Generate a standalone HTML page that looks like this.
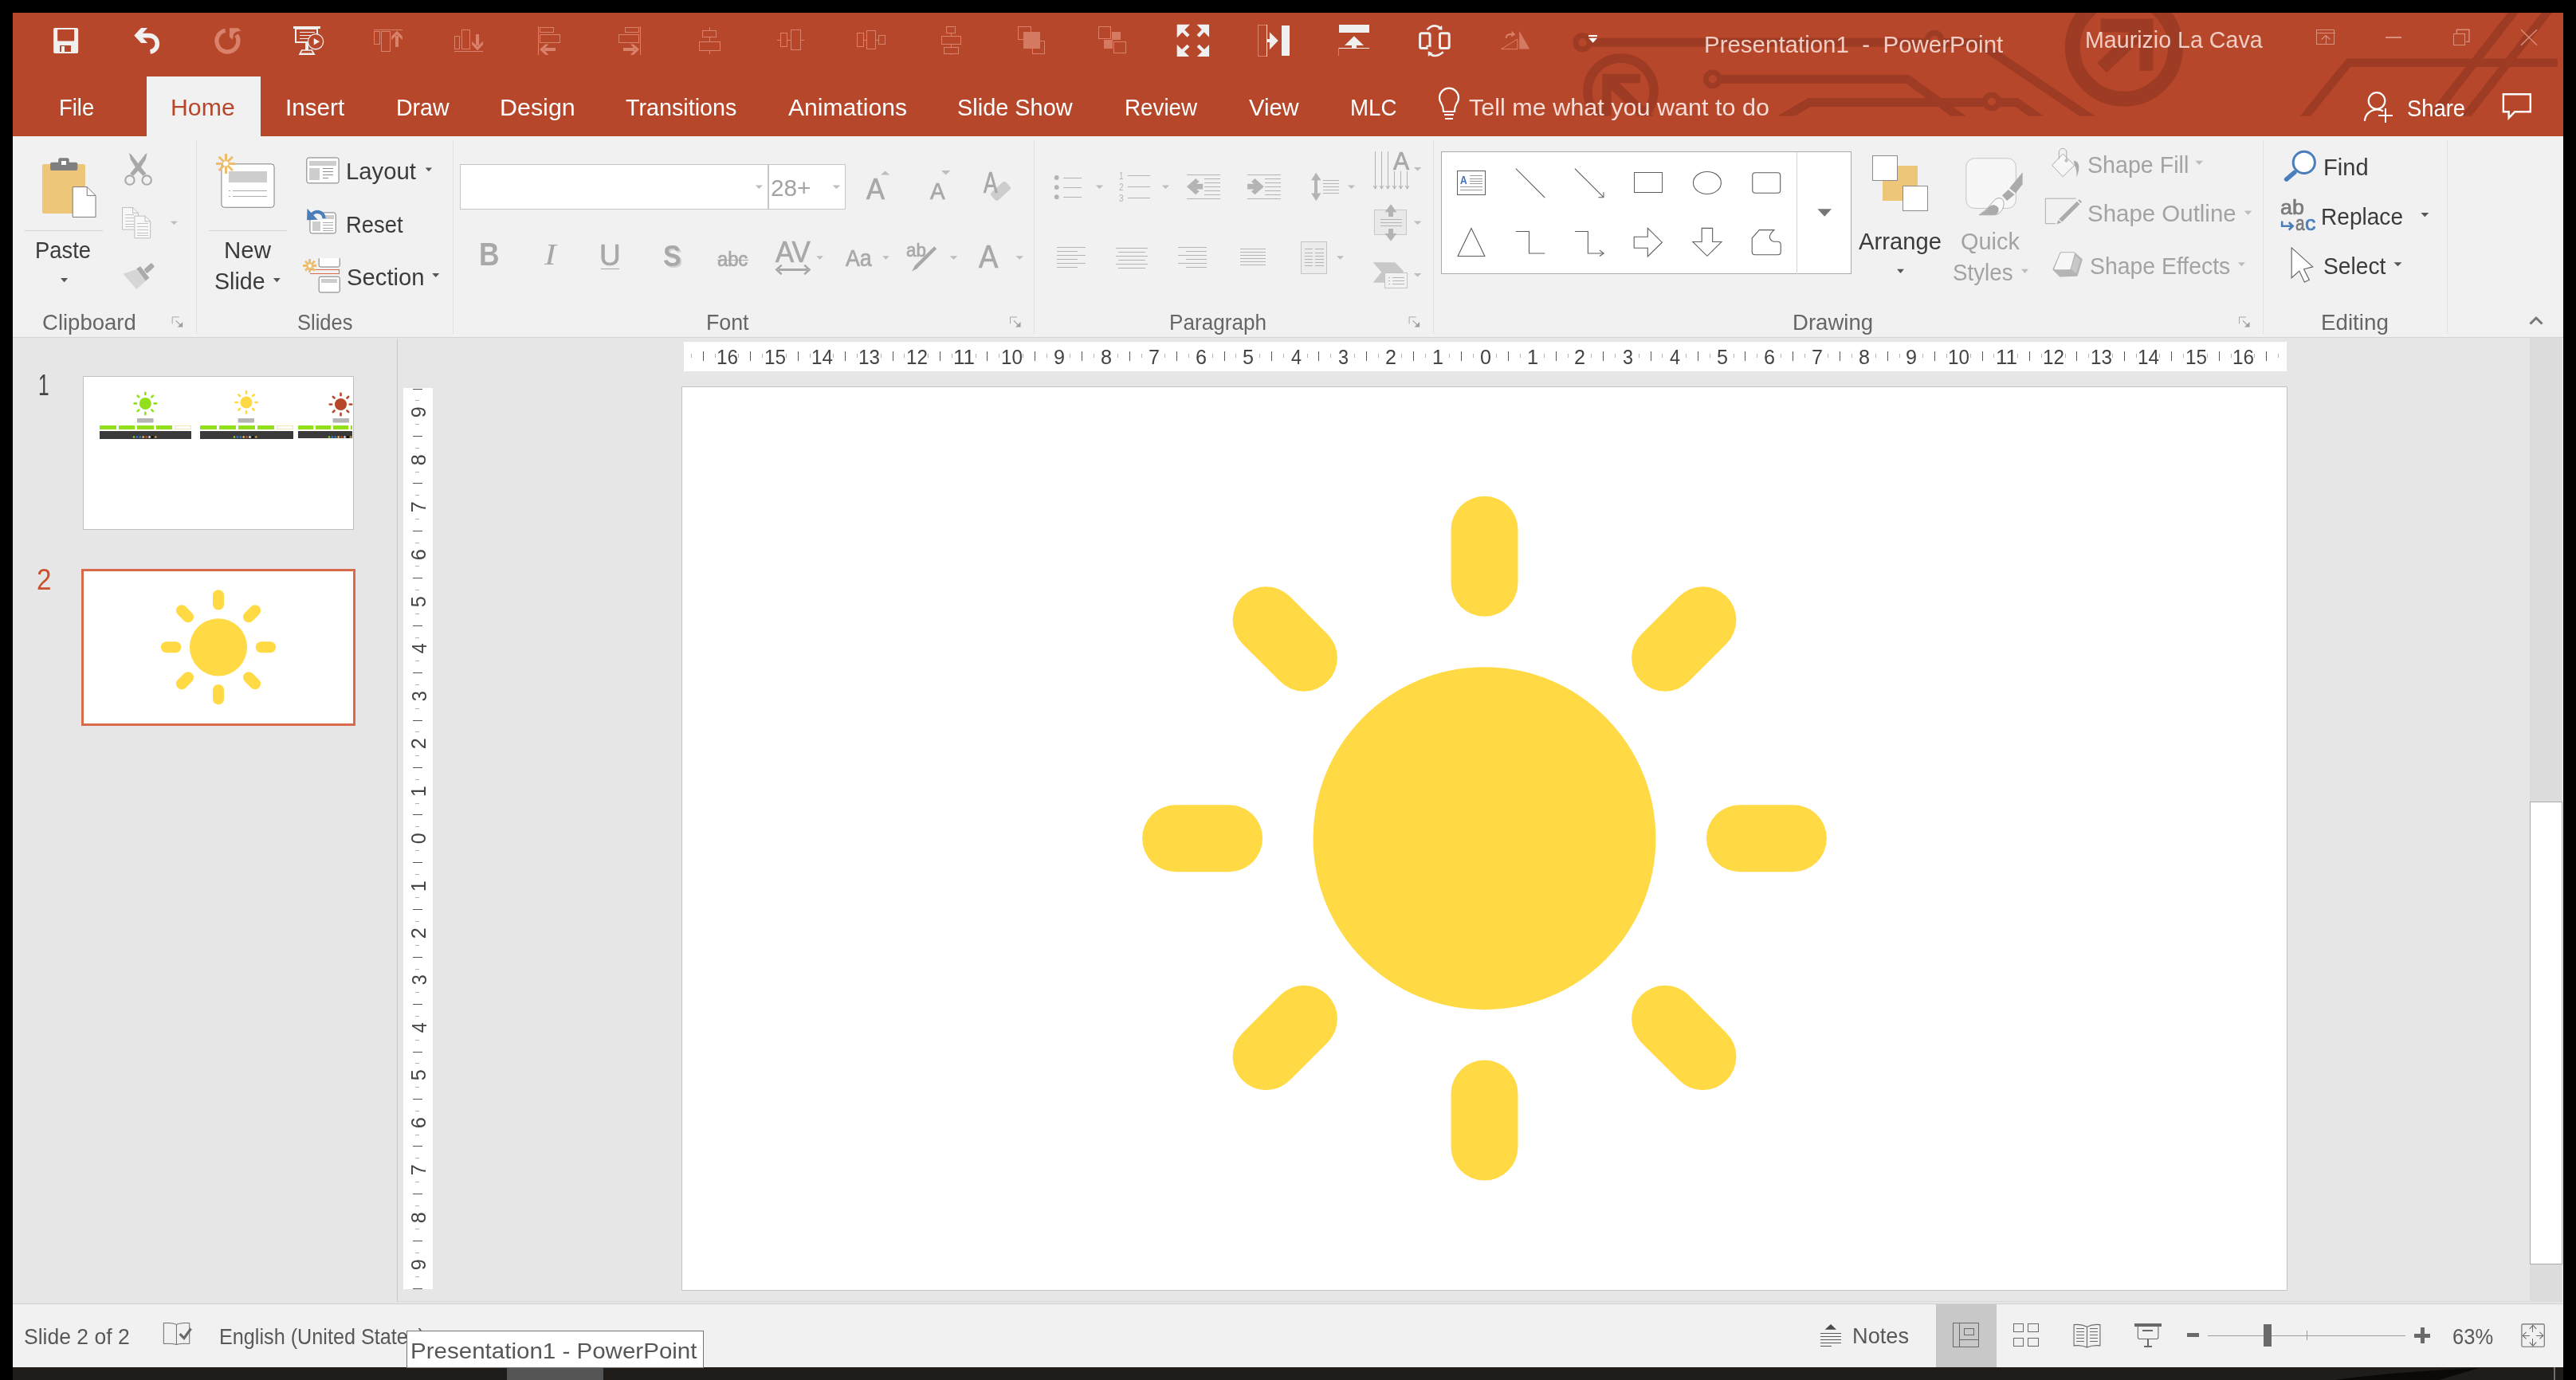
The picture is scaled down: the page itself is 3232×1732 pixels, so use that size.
<!DOCTYPE html>
<html><head><meta charset="utf-8"><title>Presentation1 - PowerPoint</title>
<style>
html,body{margin:0;padding:0;background:#000;}
body{width:3232px;height:1732px;position:relative;overflow:hidden;font-family:"Liberation Sans",sans-serif;}
#g{position:absolute;left:0;top:0;}
#tx{position:absolute;left:0;top:0;width:3232px;height:1732px;will-change:transform;}
.t{position:absolute;white-space:pre;line-height:1;transform-origin:0 0;}
</style></head><body>
<svg id="g" width="3232" height="1732" viewBox="0 0 3232 1732">
<rect x="0" y="0" width="3232" height="1732" fill="#000"  shape-rendering="crispEdges"/>
<rect x="16" y="16" width="3200" height="1700" fill="#E6E6E6"  shape-rendering="crispEdges"/>
<rect x="16" y="16" width="3200" height="155" fill="#B7472A"  shape-rendering="crispEdges"/>
<rect x="16" y="171" width="3200" height="252" fill="#F1F1F1"  shape-rendering="crispEdges"/>
<line x1="16" y1="423.5" x2="3216" y2="423.5" stroke="#D4D4D4" stroke-width="1"  shape-rendering="crispEdges"/>
<rect x="16" y="1637" width="3200" height="79" fill="#F1F1F1"  shape-rendering="crispEdges"/>
<line x1="16" y1="1636.5" x2="3216" y2="1636.5" stroke="#D0D0D0" stroke-width="1"  shape-rendering="crispEdges"/>
<line x1="498" y1="1633.5" x2="3216" y2="1633.5" stroke="#D8D8D8" stroke-width="1"  shape-rendering="crispEdges"/>
<rect x="16" y="1716" width="3200" height="16" fill="#1F1C19"  shape-rendering="crispEdges"/>
<rect x="3204" y="1716" width="2" height="16" fill="#6E6E6E"  shape-rendering="crispEdges"/>
<path d="M2930 1732 Q3000 1722 3110 1717 L3060 1732 Z" fill="#0A0908"/>
<rect x="636" y="1716" width="121" height="16" fill="#555555"  shape-rendering="crispEdges"/>
<line x1="498.5" y1="425" x2="498.5" y2="1633" stroke="#C8C8C8" stroke-width="1"  shape-rendering="crispEdges"/>
<rect x="3174" y="424" width="41" height="1210" fill="#DCDCDC"  shape-rendering="crispEdges"/>
<rect x="3215" y="424" width="1" height="1213" fill="#F0F0F0"  shape-rendering="crispEdges"/>
<rect x="3174.5" y="1006.5" width="40" height="580" fill="#FFFFFF" stroke="#ABABAB" stroke-width="1"  shape-rendering="crispEdges"/>
<rect x="855.5" y="485.5" width="2014" height="1134" fill="#FFFFFF" stroke="#C3C3C3" stroke-width="1"  shape-rendering="crispEdges"/>
<circle cx="1862.5" cy="1052.2" r="215" fill="#FFDA44"/>
<rect x="1820.50" y="622.80" width="84.00" height="151.00" rx="42.00" fill="#FFDA44" transform="rotate(0 1862.5 1052.2)"/>
<rect x="1820.50" y="622.80" width="84.00" height="151.00" rx="42.00" fill="#FFDA44" transform="rotate(45 1862.5 1052.2)"/>
<rect x="1820.50" y="622.80" width="84.00" height="151.00" rx="42.00" fill="#FFDA44" transform="rotate(90 1862.5 1052.2)"/>
<rect x="1820.50" y="622.80" width="84.00" height="151.00" rx="42.00" fill="#FFDA44" transform="rotate(135 1862.5 1052.2)"/>
<rect x="1820.50" y="622.80" width="84.00" height="151.00" rx="42.00" fill="#FFDA44" transform="rotate(180 1862.5 1052.2)"/>
<rect x="1820.50" y="622.80" width="84.00" height="151.00" rx="42.00" fill="#FFDA44" transform="rotate(225 1862.5 1052.2)"/>
<rect x="1820.50" y="622.80" width="84.00" height="151.00" rx="42.00" fill="#FFDA44" transform="rotate(270 1862.5 1052.2)"/>
<rect x="1820.50" y="622.80" width="84.00" height="151.00" rx="42.00" fill="#FFDA44" transform="rotate(315 1862.5 1052.2)"/>
<rect x="858" y="429" width="2011" height="37" fill="#FFFFFF"  shape-rendering="crispEdges"/>
<rect x="506" y="487" width="37" height="1131" fill="#FFFFFF"  shape-rendering="crispEdges"/>
<line x1="867.5" y1="444" x2="867.5" y2="449" stroke="#B0B0B0" stroke-width="1"  shape-rendering="crispEdges"/>
<line x1="882.5" y1="441" x2="882.5" y2="453" stroke="#555555" stroke-width="1"  shape-rendering="crispEdges"/>
<line x1="897.5" y1="444" x2="897.5" y2="449" stroke="#B0B0B0" stroke-width="1"  shape-rendering="crispEdges"/>
<line x1="926.5" y1="444" x2="926.5" y2="449" stroke="#B0B0B0" stroke-width="1"  shape-rendering="crispEdges"/>
<line x1="941.5" y1="441" x2="941.5" y2="453" stroke="#555555" stroke-width="1"  shape-rendering="crispEdges"/>
<line x1="956.5" y1="444" x2="956.5" y2="449" stroke="#B0B0B0" stroke-width="1"  shape-rendering="crispEdges"/>
<line x1="986.5" y1="444" x2="986.5" y2="449" stroke="#B0B0B0" stroke-width="1"  shape-rendering="crispEdges"/>
<line x1="1001.5" y1="441" x2="1001.5" y2="453" stroke="#555555" stroke-width="1"  shape-rendering="crispEdges"/>
<line x1="1016.5" y1="444" x2="1016.5" y2="449" stroke="#B0B0B0" stroke-width="1"  shape-rendering="crispEdges"/>
<line x1="1045.5" y1="444" x2="1045.5" y2="449" stroke="#B0B0B0" stroke-width="1"  shape-rendering="crispEdges"/>
<line x1="1060.5" y1="441" x2="1060.5" y2="453" stroke="#555555" stroke-width="1"  shape-rendering="crispEdges"/>
<line x1="1075.5" y1="444" x2="1075.5" y2="449" stroke="#B0B0B0" stroke-width="1"  shape-rendering="crispEdges"/>
<line x1="1105.5" y1="444" x2="1105.5" y2="449" stroke="#B0B0B0" stroke-width="1"  shape-rendering="crispEdges"/>
<line x1="1120.5" y1="441" x2="1120.5" y2="453" stroke="#555555" stroke-width="1"  shape-rendering="crispEdges"/>
<line x1="1134.5" y1="444" x2="1134.5" y2="449" stroke="#B0B0B0" stroke-width="1"  shape-rendering="crispEdges"/>
<line x1="1164.5" y1="444" x2="1164.5" y2="449" stroke="#B0B0B0" stroke-width="1"  shape-rendering="crispEdges"/>
<line x1="1179.5" y1="441" x2="1179.5" y2="453" stroke="#555555" stroke-width="1"  shape-rendering="crispEdges"/>
<line x1="1194.5" y1="444" x2="1194.5" y2="449" stroke="#B0B0B0" stroke-width="1"  shape-rendering="crispEdges"/>
<line x1="1224.5" y1="444" x2="1224.5" y2="449" stroke="#B0B0B0" stroke-width="1"  shape-rendering="crispEdges"/>
<line x1="1238.5" y1="441" x2="1238.5" y2="453" stroke="#555555" stroke-width="1"  shape-rendering="crispEdges"/>
<line x1="1253.5" y1="444" x2="1253.5" y2="449" stroke="#B0B0B0" stroke-width="1"  shape-rendering="crispEdges"/>
<line x1="1283.5" y1="444" x2="1283.5" y2="449" stroke="#B0B0B0" stroke-width="1"  shape-rendering="crispEdges"/>
<line x1="1298.5" y1="441" x2="1298.5" y2="453" stroke="#555555" stroke-width="1"  shape-rendering="crispEdges"/>
<line x1="1313.5" y1="444" x2="1313.5" y2="449" stroke="#B0B0B0" stroke-width="1"  shape-rendering="crispEdges"/>
<line x1="1342.5" y1="444" x2="1342.5" y2="449" stroke="#B0B0B0" stroke-width="1"  shape-rendering="crispEdges"/>
<line x1="1357.5" y1="441" x2="1357.5" y2="453" stroke="#555555" stroke-width="1"  shape-rendering="crispEdges"/>
<line x1="1372.5" y1="444" x2="1372.5" y2="449" stroke="#B0B0B0" stroke-width="1"  shape-rendering="crispEdges"/>
<line x1="1402.5" y1="444" x2="1402.5" y2="449" stroke="#B0B0B0" stroke-width="1"  shape-rendering="crispEdges"/>
<line x1="1417.5" y1="441" x2="1417.5" y2="453" stroke="#555555" stroke-width="1"  shape-rendering="crispEdges"/>
<line x1="1432.5" y1="444" x2="1432.5" y2="449" stroke="#B0B0B0" stroke-width="1"  shape-rendering="crispEdges"/>
<line x1="1461.5" y1="444" x2="1461.5" y2="449" stroke="#B0B0B0" stroke-width="1"  shape-rendering="crispEdges"/>
<line x1="1476.5" y1="441" x2="1476.5" y2="453" stroke="#555555" stroke-width="1"  shape-rendering="crispEdges"/>
<line x1="1491.5" y1="444" x2="1491.5" y2="449" stroke="#B0B0B0" stroke-width="1"  shape-rendering="crispEdges"/>
<line x1="1521.5" y1="444" x2="1521.5" y2="449" stroke="#B0B0B0" stroke-width="1"  shape-rendering="crispEdges"/>
<line x1="1536.5" y1="441" x2="1536.5" y2="453" stroke="#555555" stroke-width="1"  shape-rendering="crispEdges"/>
<line x1="1550.5" y1="444" x2="1550.5" y2="449" stroke="#B0B0B0" stroke-width="1"  shape-rendering="crispEdges"/>
<line x1="1580.5" y1="444" x2="1580.5" y2="449" stroke="#B0B0B0" stroke-width="1"  shape-rendering="crispEdges"/>
<line x1="1595.5" y1="441" x2="1595.5" y2="453" stroke="#555555" stroke-width="1"  shape-rendering="crispEdges"/>
<line x1="1610.5" y1="444" x2="1610.5" y2="449" stroke="#B0B0B0" stroke-width="1"  shape-rendering="crispEdges"/>
<line x1="1640.5" y1="444" x2="1640.5" y2="449" stroke="#B0B0B0" stroke-width="1"  shape-rendering="crispEdges"/>
<line x1="1654.5" y1="441" x2="1654.5" y2="453" stroke="#555555" stroke-width="1"  shape-rendering="crispEdges"/>
<line x1="1669.5" y1="444" x2="1669.5" y2="449" stroke="#B0B0B0" stroke-width="1"  shape-rendering="crispEdges"/>
<line x1="1699.5" y1="444" x2="1699.5" y2="449" stroke="#B0B0B0" stroke-width="1"  shape-rendering="crispEdges"/>
<line x1="1714.5" y1="441" x2="1714.5" y2="453" stroke="#555555" stroke-width="1"  shape-rendering="crispEdges"/>
<line x1="1729.5" y1="444" x2="1729.5" y2="449" stroke="#B0B0B0" stroke-width="1"  shape-rendering="crispEdges"/>
<line x1="1758.5" y1="444" x2="1758.5" y2="449" stroke="#B0B0B0" stroke-width="1"  shape-rendering="crispEdges"/>
<line x1="1773.5" y1="441" x2="1773.5" y2="453" stroke="#555555" stroke-width="1"  shape-rendering="crispEdges"/>
<line x1="1788.5" y1="444" x2="1788.5" y2="449" stroke="#B0B0B0" stroke-width="1"  shape-rendering="crispEdges"/>
<line x1="1818.5" y1="444" x2="1818.5" y2="449" stroke="#B0B0B0" stroke-width="1"  shape-rendering="crispEdges"/>
<line x1="1833.5" y1="441" x2="1833.5" y2="453" stroke="#555555" stroke-width="1"  shape-rendering="crispEdges"/>
<line x1="1848.5" y1="444" x2="1848.5" y2="449" stroke="#B0B0B0" stroke-width="1"  shape-rendering="crispEdges"/>
<line x1="1877.5" y1="444" x2="1877.5" y2="449" stroke="#B0B0B0" stroke-width="1"  shape-rendering="crispEdges"/>
<line x1="1892.5" y1="441" x2="1892.5" y2="453" stroke="#555555" stroke-width="1"  shape-rendering="crispEdges"/>
<line x1="1907.5" y1="444" x2="1907.5" y2="449" stroke="#B0B0B0" stroke-width="1"  shape-rendering="crispEdges"/>
<line x1="1937.5" y1="444" x2="1937.5" y2="449" stroke="#B0B0B0" stroke-width="1"  shape-rendering="crispEdges"/>
<line x1="1952.5" y1="441" x2="1952.5" y2="453" stroke="#555555" stroke-width="1"  shape-rendering="crispEdges"/>
<line x1="1967.5" y1="444" x2="1967.5" y2="449" stroke="#B0B0B0" stroke-width="1"  shape-rendering="crispEdges"/>
<line x1="1996.5" y1="444" x2="1996.5" y2="449" stroke="#B0B0B0" stroke-width="1"  shape-rendering="crispEdges"/>
<line x1="2011.5" y1="441" x2="2011.5" y2="453" stroke="#555555" stroke-width="1"  shape-rendering="crispEdges"/>
<line x1="2026.5" y1="444" x2="2026.5" y2="449" stroke="#B0B0B0" stroke-width="1"  shape-rendering="crispEdges"/>
<line x1="2056.5" y1="444" x2="2056.5" y2="449" stroke="#B0B0B0" stroke-width="1"  shape-rendering="crispEdges"/>
<line x1="2071.5" y1="441" x2="2071.5" y2="453" stroke="#555555" stroke-width="1"  shape-rendering="crispEdges"/>
<line x1="2085.5" y1="444" x2="2085.5" y2="449" stroke="#B0B0B0" stroke-width="1"  shape-rendering="crispEdges"/>
<line x1="2115.5" y1="444" x2="2115.5" y2="449" stroke="#B0B0B0" stroke-width="1"  shape-rendering="crispEdges"/>
<line x1="2130.5" y1="441" x2="2130.5" y2="453" stroke="#555555" stroke-width="1"  shape-rendering="crispEdges"/>
<line x1="2145.5" y1="444" x2="2145.5" y2="449" stroke="#B0B0B0" stroke-width="1"  shape-rendering="crispEdges"/>
<line x1="2175.5" y1="444" x2="2175.5" y2="449" stroke="#B0B0B0" stroke-width="1"  shape-rendering="crispEdges"/>
<line x1="2189.5" y1="441" x2="2189.5" y2="453" stroke="#555555" stroke-width="1"  shape-rendering="crispEdges"/>
<line x1="2204.5" y1="444" x2="2204.5" y2="449" stroke="#B0B0B0" stroke-width="1"  shape-rendering="crispEdges"/>
<line x1="2234.5" y1="444" x2="2234.5" y2="449" stroke="#B0B0B0" stroke-width="1"  shape-rendering="crispEdges"/>
<line x1="2249.5" y1="441" x2="2249.5" y2="453" stroke="#555555" stroke-width="1"  shape-rendering="crispEdges"/>
<line x1="2264.5" y1="444" x2="2264.5" y2="449" stroke="#B0B0B0" stroke-width="1"  shape-rendering="crispEdges"/>
<line x1="2293.5" y1="444" x2="2293.5" y2="449" stroke="#B0B0B0" stroke-width="1"  shape-rendering="crispEdges"/>
<line x1="2308.5" y1="441" x2="2308.5" y2="453" stroke="#555555" stroke-width="1"  shape-rendering="crispEdges"/>
<line x1="2323.5" y1="444" x2="2323.5" y2="449" stroke="#B0B0B0" stroke-width="1"  shape-rendering="crispEdges"/>
<line x1="2353.5" y1="444" x2="2353.5" y2="449" stroke="#B0B0B0" stroke-width="1"  shape-rendering="crispEdges"/>
<line x1="2368.5" y1="441" x2="2368.5" y2="453" stroke="#555555" stroke-width="1"  shape-rendering="crispEdges"/>
<line x1="2383.5" y1="444" x2="2383.5" y2="449" stroke="#B0B0B0" stroke-width="1"  shape-rendering="crispEdges"/>
<line x1="2412.5" y1="444" x2="2412.5" y2="449" stroke="#B0B0B0" stroke-width="1"  shape-rendering="crispEdges"/>
<line x1="2427.5" y1="441" x2="2427.5" y2="453" stroke="#555555" stroke-width="1"  shape-rendering="crispEdges"/>
<line x1="2442.5" y1="444" x2="2442.5" y2="449" stroke="#B0B0B0" stroke-width="1"  shape-rendering="crispEdges"/>
<line x1="2472.5" y1="444" x2="2472.5" y2="449" stroke="#B0B0B0" stroke-width="1"  shape-rendering="crispEdges"/>
<line x1="2487.5" y1="441" x2="2487.5" y2="453" stroke="#555555" stroke-width="1"  shape-rendering="crispEdges"/>
<line x1="2501.5" y1="444" x2="2501.5" y2="449" stroke="#B0B0B0" stroke-width="1"  shape-rendering="crispEdges"/>
<line x1="2531.5" y1="444" x2="2531.5" y2="449" stroke="#B0B0B0" stroke-width="1"  shape-rendering="crispEdges"/>
<line x1="2546.5" y1="441" x2="2546.5" y2="453" stroke="#555555" stroke-width="1"  shape-rendering="crispEdges"/>
<line x1="2561.5" y1="444" x2="2561.5" y2="449" stroke="#B0B0B0" stroke-width="1"  shape-rendering="crispEdges"/>
<line x1="2591.5" y1="444" x2="2591.5" y2="449" stroke="#B0B0B0" stroke-width="1"  shape-rendering="crispEdges"/>
<line x1="2605.5" y1="441" x2="2605.5" y2="453" stroke="#555555" stroke-width="1"  shape-rendering="crispEdges"/>
<line x1="2620.5" y1="444" x2="2620.5" y2="449" stroke="#B0B0B0" stroke-width="1"  shape-rendering="crispEdges"/>
<line x1="2650.5" y1="444" x2="2650.5" y2="449" stroke="#B0B0B0" stroke-width="1"  shape-rendering="crispEdges"/>
<line x1="2665.5" y1="441" x2="2665.5" y2="453" stroke="#555555" stroke-width="1"  shape-rendering="crispEdges"/>
<line x1="2680.5" y1="444" x2="2680.5" y2="449" stroke="#B0B0B0" stroke-width="1"  shape-rendering="crispEdges"/>
<line x1="2709.5" y1="444" x2="2709.5" y2="449" stroke="#B0B0B0" stroke-width="1"  shape-rendering="crispEdges"/>
<line x1="2724.5" y1="441" x2="2724.5" y2="453" stroke="#555555" stroke-width="1"  shape-rendering="crispEdges"/>
<line x1="2739.5" y1="444" x2="2739.5" y2="449" stroke="#B0B0B0" stroke-width="1"  shape-rendering="crispEdges"/>
<line x1="2769.5" y1="444" x2="2769.5" y2="449" stroke="#B0B0B0" stroke-width="1"  shape-rendering="crispEdges"/>
<line x1="2784.5" y1="441" x2="2784.5" y2="453" stroke="#555555" stroke-width="1"  shape-rendering="crispEdges"/>
<line x1="2799.5" y1="444" x2="2799.5" y2="449" stroke="#B0B0B0" stroke-width="1"  shape-rendering="crispEdges"/>
<line x1="2828.5" y1="444" x2="2828.5" y2="449" stroke="#B0B0B0" stroke-width="1"  shape-rendering="crispEdges"/>
<line x1="2843.5" y1="441" x2="2843.5" y2="453" stroke="#555555" stroke-width="1"  shape-rendering="crispEdges"/>
<line x1="2858.5" y1="444" x2="2858.5" y2="449" stroke="#B0B0B0" stroke-width="1"  shape-rendering="crispEdges"/>
<line x1="518" y1="488.5" x2="530" y2="488.5" stroke="#555555" stroke-width="1"  shape-rendering="crispEdges"/>
<line x1="521" y1="502.5" x2="526" y2="502.5" stroke="#B0B0B0" stroke-width="1"  shape-rendering="crispEdges"/>
<line x1="521" y1="532.5" x2="526" y2="532.5" stroke="#B0B0B0" stroke-width="1"  shape-rendering="crispEdges"/>
<line x1="518" y1="547.5" x2="530" y2="547.5" stroke="#555555" stroke-width="1"  shape-rendering="crispEdges"/>
<line x1="521" y1="562.5" x2="526" y2="562.5" stroke="#B0B0B0" stroke-width="1"  shape-rendering="crispEdges"/>
<line x1="521" y1="592.5" x2="526" y2="592.5" stroke="#B0B0B0" stroke-width="1"  shape-rendering="crispEdges"/>
<line x1="518" y1="606.5" x2="530" y2="606.5" stroke="#555555" stroke-width="1"  shape-rendering="crispEdges"/>
<line x1="521" y1="621.5" x2="526" y2="621.5" stroke="#B0B0B0" stroke-width="1"  shape-rendering="crispEdges"/>
<line x1="521" y1="651.5" x2="526" y2="651.5" stroke="#B0B0B0" stroke-width="1"  shape-rendering="crispEdges"/>
<line x1="518" y1="666.5" x2="530" y2="666.5" stroke="#555555" stroke-width="1"  shape-rendering="crispEdges"/>
<line x1="521" y1="681.5" x2="526" y2="681.5" stroke="#B0B0B0" stroke-width="1"  shape-rendering="crispEdges"/>
<line x1="521" y1="710.5" x2="526" y2="710.5" stroke="#B0B0B0" stroke-width="1"  shape-rendering="crispEdges"/>
<line x1="518" y1="725.5" x2="530" y2="725.5" stroke="#555555" stroke-width="1"  shape-rendering="crispEdges"/>
<line x1="521" y1="740.5" x2="526" y2="740.5" stroke="#B0B0B0" stroke-width="1"  shape-rendering="crispEdges"/>
<line x1="521" y1="770.5" x2="526" y2="770.5" stroke="#B0B0B0" stroke-width="1"  shape-rendering="crispEdges"/>
<line x1="518" y1="785.5" x2="530" y2="785.5" stroke="#555555" stroke-width="1"  shape-rendering="crispEdges"/>
<line x1="521" y1="800.5" x2="526" y2="800.5" stroke="#B0B0B0" stroke-width="1"  shape-rendering="crispEdges"/>
<line x1="521" y1="829.5" x2="526" y2="829.5" stroke="#B0B0B0" stroke-width="1"  shape-rendering="crispEdges"/>
<line x1="518" y1="844.5" x2="530" y2="844.5" stroke="#555555" stroke-width="1"  shape-rendering="crispEdges"/>
<line x1="521" y1="859.5" x2="526" y2="859.5" stroke="#B0B0B0" stroke-width="1"  shape-rendering="crispEdges"/>
<line x1="521" y1="889.5" x2="526" y2="889.5" stroke="#B0B0B0" stroke-width="1"  shape-rendering="crispEdges"/>
<line x1="518" y1="904.5" x2="530" y2="904.5" stroke="#555555" stroke-width="1"  shape-rendering="crispEdges"/>
<line x1="521" y1="918.5" x2="526" y2="918.5" stroke="#B0B0B0" stroke-width="1"  shape-rendering="crispEdges"/>
<line x1="521" y1="948.5" x2="526" y2="948.5" stroke="#B0B0B0" stroke-width="1"  shape-rendering="crispEdges"/>
<line x1="518" y1="963.5" x2="530" y2="963.5" stroke="#555555" stroke-width="1"  shape-rendering="crispEdges"/>
<line x1="521" y1="978.5" x2="526" y2="978.5" stroke="#B0B0B0" stroke-width="1"  shape-rendering="crispEdges"/>
<line x1="521" y1="1008.5" x2="526" y2="1008.5" stroke="#B0B0B0" stroke-width="1"  shape-rendering="crispEdges"/>
<line x1="518" y1="1022.5" x2="530" y2="1022.5" stroke="#555555" stroke-width="1"  shape-rendering="crispEdges"/>
<line x1="521" y1="1037.5" x2="526" y2="1037.5" stroke="#B0B0B0" stroke-width="1"  shape-rendering="crispEdges"/>
<line x1="521" y1="1067.5" x2="526" y2="1067.5" stroke="#B0B0B0" stroke-width="1"  shape-rendering="crispEdges"/>
<line x1="518" y1="1082.5" x2="530" y2="1082.5" stroke="#555555" stroke-width="1"  shape-rendering="crispEdges"/>
<line x1="521" y1="1097.5" x2="526" y2="1097.5" stroke="#B0B0B0" stroke-width="1"  shape-rendering="crispEdges"/>
<line x1="521" y1="1126.5" x2="526" y2="1126.5" stroke="#B0B0B0" stroke-width="1"  shape-rendering="crispEdges"/>
<line x1="518" y1="1141.5" x2="530" y2="1141.5" stroke="#555555" stroke-width="1"  shape-rendering="crispEdges"/>
<line x1="521" y1="1156.5" x2="526" y2="1156.5" stroke="#B0B0B0" stroke-width="1"  shape-rendering="crispEdges"/>
<line x1="521" y1="1186.5" x2="526" y2="1186.5" stroke="#B0B0B0" stroke-width="1"  shape-rendering="crispEdges"/>
<line x1="518" y1="1201.5" x2="530" y2="1201.5" stroke="#555555" stroke-width="1"  shape-rendering="crispEdges"/>
<line x1="521" y1="1216.5" x2="526" y2="1216.5" stroke="#B0B0B0" stroke-width="1"  shape-rendering="crispEdges"/>
<line x1="521" y1="1245.5" x2="526" y2="1245.5" stroke="#B0B0B0" stroke-width="1"  shape-rendering="crispEdges"/>
<line x1="518" y1="1260.5" x2="530" y2="1260.5" stroke="#555555" stroke-width="1"  shape-rendering="crispEdges"/>
<line x1="521" y1="1275.5" x2="526" y2="1275.5" stroke="#B0B0B0" stroke-width="1"  shape-rendering="crispEdges"/>
<line x1="521" y1="1305.5" x2="526" y2="1305.5" stroke="#B0B0B0" stroke-width="1"  shape-rendering="crispEdges"/>
<line x1="518" y1="1320.5" x2="530" y2="1320.5" stroke="#555555" stroke-width="1"  shape-rendering="crispEdges"/>
<line x1="521" y1="1334.5" x2="526" y2="1334.5" stroke="#B0B0B0" stroke-width="1"  shape-rendering="crispEdges"/>
<line x1="521" y1="1364.5" x2="526" y2="1364.5" stroke="#B0B0B0" stroke-width="1"  shape-rendering="crispEdges"/>
<line x1="518" y1="1379.5" x2="530" y2="1379.5" stroke="#555555" stroke-width="1"  shape-rendering="crispEdges"/>
<line x1="521" y1="1394.5" x2="526" y2="1394.5" stroke="#B0B0B0" stroke-width="1"  shape-rendering="crispEdges"/>
<line x1="521" y1="1424.5" x2="526" y2="1424.5" stroke="#B0B0B0" stroke-width="1"  shape-rendering="crispEdges"/>
<line x1="518" y1="1438.5" x2="530" y2="1438.5" stroke="#555555" stroke-width="1"  shape-rendering="crispEdges"/>
<line x1="521" y1="1453.5" x2="526" y2="1453.5" stroke="#B0B0B0" stroke-width="1"  shape-rendering="crispEdges"/>
<line x1="521" y1="1483.5" x2="526" y2="1483.5" stroke="#B0B0B0" stroke-width="1"  shape-rendering="crispEdges"/>
<line x1="518" y1="1498.5" x2="530" y2="1498.5" stroke="#555555" stroke-width="1"  shape-rendering="crispEdges"/>
<line x1="521" y1="1513.5" x2="526" y2="1513.5" stroke="#B0B0B0" stroke-width="1"  shape-rendering="crispEdges"/>
<line x1="521" y1="1542.5" x2="526" y2="1542.5" stroke="#B0B0B0" stroke-width="1"  shape-rendering="crispEdges"/>
<line x1="518" y1="1557.5" x2="530" y2="1557.5" stroke="#555555" stroke-width="1"  shape-rendering="crispEdges"/>
<line x1="521" y1="1572.5" x2="526" y2="1572.5" stroke="#B0B0B0" stroke-width="1"  shape-rendering="crispEdges"/>
<line x1="521" y1="1602.5" x2="526" y2="1602.5" stroke="#B0B0B0" stroke-width="1"  shape-rendering="crispEdges"/>
<line x1="518" y1="1617.5" x2="530" y2="1617.5" stroke="#555555" stroke-width="1"  shape-rendering="crispEdges"/>
<rect x="104.5" y="472.5" width="339" height="192" fill="#FFFFFF" stroke="#C0C0C0" stroke-width="1"  shape-rendering="crispEdges"/>
<rect x="103.5" y="715.5" width="341" height="194" fill="#FFFFFF" stroke="#D86B4B" stroke-width="3"  shape-rendering="crispEdges"/>
<circle cx="274" cy="812.3" r="36.1" fill="#FFDA44"/>
<rect x="266.95" y="740.20" width="14.10" height="25.35" rx="7.05" fill="#FFDA44" transform="rotate(0 274 812.3)"/>
<rect x="266.95" y="740.20" width="14.10" height="25.35" rx="7.05" fill="#FFDA44" transform="rotate(45 274 812.3)"/>
<rect x="266.95" y="740.20" width="14.10" height="25.35" rx="7.05" fill="#FFDA44" transform="rotate(90 274 812.3)"/>
<rect x="266.95" y="740.20" width="14.10" height="25.35" rx="7.05" fill="#FFDA44" transform="rotate(135 274 812.3)"/>
<rect x="266.95" y="740.20" width="14.10" height="25.35" rx="7.05" fill="#FFDA44" transform="rotate(180 274 812.3)"/>
<rect x="266.95" y="740.20" width="14.10" height="25.35" rx="7.05" fill="#FFDA44" transform="rotate(225 274 812.3)"/>
<rect x="266.95" y="740.20" width="14.10" height="25.35" rx="7.05" fill="#FFDA44" transform="rotate(270 274 812.3)"/>
<rect x="266.95" y="740.20" width="14.10" height="25.35" rx="7.05" fill="#FFDA44" transform="rotate(315 274 812.3)"/>
<circle cx="182.3" cy="506.4" r="7.5" fill="#92E01A"/>
<rect x="181.0" y="491.4" width="2.6" height="5" rx="1.3" fill="#92E01A" transform="rotate(0 182.3 506.4)"/>
<rect x="181.0" y="491.4" width="2.6" height="5" rx="1.3" fill="#92E01A" transform="rotate(45 182.3 506.4)"/>
<rect x="181.0" y="491.4" width="2.6" height="5" rx="1.3" fill="#92E01A" transform="rotate(90 182.3 506.4)"/>
<rect x="181.0" y="491.4" width="2.6" height="5" rx="1.3" fill="#92E01A" transform="rotate(135 182.3 506.4)"/>
<rect x="181.0" y="491.4" width="2.6" height="5" rx="1.3" fill="#92E01A" transform="rotate(180 182.3 506.4)"/>
<rect x="181.0" y="491.4" width="2.6" height="5" rx="1.3" fill="#92E01A" transform="rotate(225 182.3 506.4)"/>
<rect x="181.0" y="491.4" width="2.6" height="5" rx="1.3" fill="#92E01A" transform="rotate(270 182.3 506.4)"/>
<rect x="181.0" y="491.4" width="2.6" height="5" rx="1.3" fill="#92E01A" transform="rotate(315 182.3 506.4)"/>
<circle cx="309" cy="505" r="7.5" fill="#FFD944"/>
<rect x="307.7" y="490" width="2.6" height="5" rx="1.3" fill="#FFD944" transform="rotate(0 309 505)"/>
<rect x="307.7" y="490" width="2.6" height="5" rx="1.3" fill="#FFD944" transform="rotate(45 309 505)"/>
<rect x="307.7" y="490" width="2.6" height="5" rx="1.3" fill="#FFD944" transform="rotate(90 309 505)"/>
<rect x="307.7" y="490" width="2.6" height="5" rx="1.3" fill="#FFD944" transform="rotate(135 309 505)"/>
<rect x="307.7" y="490" width="2.6" height="5" rx="1.3" fill="#FFD944" transform="rotate(180 309 505)"/>
<rect x="307.7" y="490" width="2.6" height="5" rx="1.3" fill="#FFD944" transform="rotate(225 309 505)"/>
<rect x="307.7" y="490" width="2.6" height="5" rx="1.3" fill="#FFD944" transform="rotate(270 309 505)"/>
<rect x="307.7" y="490" width="2.6" height="5" rx="1.3" fill="#FFD944" transform="rotate(315 309 505)"/>
<circle cx="427.5" cy="507.5" r="7.5" fill="#B7472A"/>
<rect x="426.2" y="492.5" width="2.6" height="5" rx="1.3" fill="#B7472A" transform="rotate(0 427.5 507.5)"/>
<rect x="426.2" y="492.5" width="2.6" height="5" rx="1.3" fill="#B7472A" transform="rotate(45 427.5 507.5)"/>
<rect x="426.2" y="492.5" width="2.6" height="5" rx="1.3" fill="#B7472A" transform="rotate(90 427.5 507.5)"/>
<rect x="426.2" y="492.5" width="2.6" height="5" rx="1.3" fill="#B7472A" transform="rotate(135 427.5 507.5)"/>
<rect x="426.2" y="492.5" width="2.6" height="5" rx="1.3" fill="#B7472A" transform="rotate(180 427.5 507.5)"/>
<rect x="426.2" y="492.5" width="2.6" height="5" rx="1.3" fill="#B7472A" transform="rotate(225 427.5 507.5)"/>
<rect x="426.2" y="492.5" width="2.6" height="5" rx="1.3" fill="#B7472A" transform="rotate(270 427.5 507.5)"/>
<rect x="426.2" y="492.5" width="2.6" height="5" rx="1.3" fill="#B7472A" transform="rotate(315 427.5 507.5)"/>
<rect x="172" y="525" width="20.6" height="5.6" fill="#B5B5B5" rx="1" />
<rect x="298.5" y="525" width="20.6" height="5.6" fill="#B5B5B5" rx="1" />
<rect x="417.5" y="525" width="20.6" height="5.6" fill="#B5B5B5" rx="1" />
<rect x="125.277950310559" y="534" width="20.380434782608695" height="5" fill="#92E01A"  shape-rendering="crispEdges"/>
<rect x="148.95807453416148" y="534" width="20.380434782608695" height="5" fill="#92E01A"  shape-rendering="crispEdges"/>
<rect x="172.25" y="534" width="20.380434782608695" height="5" fill="#92E01A"  shape-rendering="crispEdges"/>
<rect x="195.9301242236025" y="534" width="19.99223602484472" height="5" fill="#92E01A"  shape-rendering="crispEdges"/>
<rect x="219.5" y="534.5" width="20" height="4" fill="#FFFFFF" stroke="#F3E6B5" stroke-width="1"  shape-rendering="crispEdges"/>
<rect x="250.86024844720495" y="533.7" width="21.350931677018632" height="5" fill="#92E01A"  shape-rendering="crispEdges"/>
<rect x="275.1226708074534" y="533.7" width="20.96273291925466" height="5" fill="#92E01A"  shape-rendering="crispEdges"/>
<rect x="298.9968944099379" y="533.7" width="20.76863354037267" height="5" fill="#92E01A"  shape-rendering="crispEdges"/>
<rect x="322.67701863354034" y="533.7" width="20.96273291925466" height="5" fill="#92E01A"  shape-rendering="crispEdges"/>
<rect x="347.5" y="534.5" width="20" height="4" fill="#FFFFFF" stroke="#F3E6B5" stroke-width="1"  shape-rendering="crispEdges"/>
<rect x="373.7251552795031" y="534" width="19.215838509316768" height="5" fill="#92E01A"  shape-rendering="crispEdges"/>
<rect x="395.8524844720497" y="534" width="19.02173913043478" height="5" fill="#92E01A"  shape-rendering="crispEdges"/>
<rect x="417.7857142857143" y="534" width="19.02173913043478" height="5" fill="#92E01A"  shape-rendering="crispEdges"/>
<rect x="439.71894409937886" y="534" width="2.329192546583851" height="5" fill="#92E01A"  shape-rendering="crispEdges"/>
<rect x="125.277950310559" y="541.3" width="114.32453416149067" height="9.7" fill="#3A3A3A"  shape-rendering="crispEdges"/>
<rect x="250.86024844720495" y="541.3" width="116.84782608695652" height="9.7" fill="#3A3A3A"  shape-rendering="crispEdges"/>
<rect x="373.7251552795031" y="541.3" width="68.32298136645963" height="8.7" fill="#3A3A3A"  shape-rendering="crispEdges"/>
<circle cx="168.0" cy="548.5" r="1.2" fill="#92E01A"/>
<circle cx="171.9" cy="548.5" r="1.2" fill="#3B7DD8"/>
<circle cx="175.8" cy="548.5" r="1.2" fill="#3B7DD8"/>
<circle cx="179.7" cy="548.5" r="1.2" fill="#FFD944"/>
<circle cx="183.6" cy="548.5" r="1.2" fill="#D9482B"/>
<circle cx="187.5" cy="548.5" r="1.2" fill="#FFFFFF"/>
<circle cx="191.4" cy="548.5" r="1.2" fill="#000000"/>
<circle cx="195.3" cy="548.5" r="1.2" fill="#E8A33D"/>
<circle cx="294.0" cy="548.5" r="1.2" fill="#92E01A"/>
<circle cx="297.9" cy="548.5" r="1.2" fill="#3B7DD8"/>
<circle cx="301.8" cy="548.5" r="1.2" fill="#3B7DD8"/>
<circle cx="305.7" cy="548.5" r="1.2" fill="#FFD944"/>
<circle cx="309.6" cy="548.5" r="1.2" fill="#D9482B"/>
<circle cx="313.5" cy="548.5" r="1.2" fill="#FFFFFF"/>
<circle cx="317.4" cy="548.5" r="1.2" fill="#000000"/>
<circle cx="321.3" cy="548.5" r="1.2" fill="#E8A33D"/>
<circle cx="413.0" cy="548.5" r="1.2" fill="#92E01A"/>
<circle cx="416.9" cy="548.5" r="1.2" fill="#3B7DD8"/>
<circle cx="420.8" cy="548.5" r="1.2" fill="#3B7DD8"/>
<circle cx="424.7" cy="548.5" r="1.2" fill="#FFD944"/>
<circle cx="428.6" cy="548.5" r="1.2" fill="#D9482B"/>
<circle cx="432.5" cy="548.5" r="1.2" fill="#FFFFFF"/>
<circle cx="436.4" cy="548.5" r="1.2" fill="#000000"/>
<circle cx="440.3" cy="548.5" r="1.2" fill="#E8A33D"/>
<clipPath id="cpat"><rect x="16" y="16" width="3200" height="129.5"/></clipPath>
<g clip-path="url(#cpat)" fill="none" stroke="#9E3B24" stroke-linecap="butt" stroke-linejoin="miter">
<circle cx="1985.6" cy="53.2" r="8.7" stroke-width="7"/>
<path d="M1997 53.2 H2420" stroke-width="11"/>
<circle cx="2427" cy="50" r="8.7" stroke-width="7"/>
<path d="M2436 53.5 H2482 L2640 160" stroke-width="11"/>
<circle cx="2033.5" cy="114.6" r="41.6" stroke-width="11.5"/>
<path d="M2058 98.5 H2016 V150" stroke-width="11.5"/>
<path d="M2018 100 L2080 160" stroke-width="13"/>
<circle cx="2148.8" cy="99.3" r="8.5" stroke-width="7"/>
<path d="M2160 99.3 H2393 L2470 155" stroke-width="11"/>
<path d="M2225 155 L2270 128.5 H2488" stroke-width="11"/>
<circle cx="2499" cy="127.5" r="8.5" stroke-width="7"/>
<path d="M2510 128.5 H2530 L2568 155" stroke-width="11"/>
<circle cx="2664.9" cy="59.6" r="64.6" stroke-width="19"/>
<path d="M2635.8 32 H2693 V88.7" stroke-width="17"/>
<path d="M2690 35 L2637 85" stroke-width="17"/>
<path d="M2884 156 L2946.6 78.8 H3209" stroke-width="10.5"/>
<path d="M3161 6 L3044 156" stroke-width="10.5"/>
<path d="M3203 6 L3086 156" stroke-width="10.5"/>
</g>
<rect x="184" y="96" width="143" height="76" fill="#F1F1F1"  shape-rendering="crispEdges"/>
<rect x="67.06" y="35.01" width="31.06" height="32.11" fill="#F0F0F0" rx="2" />
<rect x="72.15" y="37.06" width="20.99" height="14.53" fill="#B7472A" rx="0.8" />
<rect x="74.94" y="57.06" width="13.98" height="7.95" fill="#B7472A"  shape-rendering="crispEdges"/>
<rect x="77.12" y="57.99" width="4.04" height="7.14" fill="#F0F0F0"  shape-rendering="crispEdges"/>
<polygon points="168.3,44.45 177.12,35.01 185.07,35.01 176.5,44.45 185.07,53.95 177.12,53.95" fill="#F0F0F0" />
<path d="M176 44.6 H187 A10.25 10.25 0 0 1 188.5 65" fill="none" stroke="#F0F0F0" stroke-width="5.6"/>
<path d="M282.71 38.24 A13.5 13.5 0 1 0 296.68 44.01" fill="none" stroke="#D9826B" stroke-width="5.3"/>
<polygon points="287.99,35.19 298.86,35.19 302.27,38.86 296.68,39.79 293.27,42.27 291.71,49.48 287.99,46.5" fill="#D9826B" />
<rect x="367.95" y="33.2" width="34.32" height="2.95" fill="#F0F0F0"  shape-rendering="crispEdges"/>
<rect x="371.23" y="36.33" width="26.98" height="16.57" fill="none" stroke="#F0F0F0" stroke-width="1.6"  shape-rendering="crispEdges"/>
<line x1="376.18" y1="40.5" x2="394.81" y2="40.5" stroke="#F0F0F0" stroke-width="1"  shape-rendering="crispEdges"/>
<line x1="376.18" y1="44.5" x2="394.81" y2="44.5" stroke="#F0F0F0" stroke-width="1"  shape-rendering="crispEdges"/>
<line x1="376.18" y1="48.5" x2="394.81" y2="48.5" stroke="#F0F0F0" stroke-width="1"  shape-rendering="crispEdges"/>
<rect x="383.17" y="53.39" width="3.42" height="10.87" fill="#F0F0F0"  shape-rendering="crispEdges"/>
<polygon points="378.2,62.24 391.71,62.24 395.59,68.91 374.63,68.91" fill="#F0F0F0" />
<polygon points="379.29,63.79 390.62,63.79 392.17,66.58 377.73,66.58" fill="#B7472A" />
<circle cx="396.06" cy="52.14" r="9.6" fill="#B7472A" stroke="#F0F0F0" stroke-width="1.3"/>
<polygon points="393.73,47.95 393.73,56.49 401.02,52.14" fill="#F0F0F0" />
<line x1="469.1" y1="37.5" x2="504.81" y2="37.5" stroke="#D9826B" stroke-width="1"  shape-rendering="crispEdges"/>
<rect x="469.5" y="39.5" width="7" height="16" fill="none" stroke="#D9826B" stroke-width="1"  shape-rendering="crispEdges"/>
<rect x="478.5" y="39.5" width="11" height="25" fill="none" stroke="#D9826B" stroke-width="1"  shape-rendering="crispEdges"/>
<rect x="496.12" y="44.84" width="3.88" height="13.98" fill="#D9826B"  shape-rendering="crispEdges"/>
<polygon points="498.14,38.63 504.81,45.62 504.81,50.28 498.14,43.6 491.15,50.28 491.15,45.62" fill="#D9826B" />
<rect x="570.5" y="45.5" width="6" height="16" fill="none" stroke="#D9826B" stroke-width="1"  shape-rendering="crispEdges"/>
<rect x="579.5" y="37.5" width="10" height="24" fill="none" stroke="#D9826B" stroke-width="1"  shape-rendering="crispEdges"/>
<rect x="597.05" y="42.98" width="3.88" height="14.29" fill="#D9826B"  shape-rendering="crispEdges"/>
<polygon points="599.07,63.17 606.06,56.02 606.06,51.83 599.07,58.51 592.08,51.83 592.08,56.02" fill="#D9826B" />
<line x1="570.03" y1="64.5" x2="606.06" y2="64.5" stroke="#D9826B" stroke-width="1"  shape-rendering="crispEdges"/>
<line x1="675.5" y1="33.2" x2="675.5" y2="68.91" stroke="#D9826B" stroke-width="1"  shape-rendering="crispEdges"/>
<rect x="677.5" y="34.5" width="17" height="6" fill="none" stroke="#D9826B" stroke-width="1"  shape-rendering="crispEdges"/>
<rect x="677.5" y="43.5" width="25" height="10" fill="none" stroke="#D9826B" stroke-width="1"  shape-rendering="crispEdges"/>
<rect x="682.92" y="60.06" width="13.98" height="3.88" fill="#D9826B"  shape-rendering="crispEdges"/>
<polygon points="677.02,61.93 684.47,55.4 688.35,55.4 682.14,61.93 688.35,68.91 684.47,68.91" fill="#D9826B" />
<line x1="803.5" y1="33.2" x2="803.5" y2="68.91" stroke="#D9826B" stroke-width="1"  shape-rendering="crispEdges"/>
<rect x="784.5" y="34.5" width="17" height="6" fill="none" stroke="#D9826B" stroke-width="1"  shape-rendering="crispEdges"/>
<rect x="776.5" y="43.5" width="25" height="10" fill="none" stroke="#D9826B" stroke-width="1"  shape-rendering="crispEdges"/>
<rect x="781.99" y="60.06" width="14.29" height="3.88" fill="#D9826B"  shape-rendering="crispEdges"/>
<polygon points="802.17,61.93 794.72,55.4 790.84,55.4 797.05,61.93 790.84,68.91 794.72,68.91" fill="#D9826B" />
<line x1="890.5" y1="33.98" x2="890.5" y2="67.83" stroke="#D9826B" stroke-width="1"  shape-rendering="crispEdges"/>
<rect x="881.5" y="38.5" width="17" height="8" fill="#B7472A" stroke="#D9826B" stroke-width="1"  shape-rendering="crispEdges"/>
<rect x="877.5" y="52.5" width="26" height="11" fill="#B7472A" stroke="#D9826B" stroke-width="1"  shape-rendering="crispEdges"/>
<line x1="975.0" y1="50.5" x2="1008.85" y2="50.5" stroke="#D9826B" stroke-width="1"  shape-rendering="crispEdges"/>
<rect x="979.5" y="41.5" width="8" height="17" fill="#B7472A" stroke="#D9826B" stroke-width="1"  shape-rendering="crispEdges"/>
<rect x="992.5" y="37.5" width="12" height="25" fill="#B7472A" stroke="#D9826B" stroke-width="1"  shape-rendering="crispEdges"/>
<line x1="1075.31" y1="50.5" x2="1110.87" y2="50.5" stroke="#D9826B" stroke-width="1"  shape-rendering="crispEdges"/>
<rect x="1075.5" y="41.5" width="8" height="17" fill="#B7472A" stroke="#D9826B" stroke-width="1"  shape-rendering="crispEdges"/>
<rect x="1087.5" y="38.5" width="11" height="23" fill="#B7472A" stroke="#D9826B" stroke-width="1"  shape-rendering="crispEdges"/>
<rect x="1102.5" y="44.5" width="8" height="11" fill="#B7472A" stroke="#D9826B" stroke-width="1"  shape-rendering="crispEdges"/>
<line x1="1193.5" y1="33.35" x2="1193.5" y2="68.76" stroke="#D9826B" stroke-width="1"  shape-rendering="crispEdges"/>
<rect x="1187.5" y="33.5" width="11" height="8" fill="#B7472A" stroke="#D9826B" stroke-width="1"  shape-rendering="crispEdges"/>
<rect x="1181.5" y="45.5" width="24" height="10" fill="#B7472A" stroke="#D9826B" stroke-width="1"  shape-rendering="crispEdges"/>
<rect x="1184.5" y="59.5" width="18" height="8" fill="#B7472A" stroke="#D9826B" stroke-width="1"  shape-rendering="crispEdges"/>
<rect x="1277.5" y="33.5" width="16" height="16" fill="none" stroke="#D9826B" stroke-width="1"  shape-rendering="crispEdges"/>
<rect x="1295.5" y="51.5" width="15" height="16" fill="none" stroke="#D9826B" stroke-width="1"  shape-rendering="crispEdges"/>
<rect x="1284.16" y="39.88" width="20.5" height="21.27" fill="#D57A62"  shape-rendering="crispEdges"/>
<rect x="1378.5" y="33.5" width="15" height="15" fill="none" stroke="#D9826B" stroke-width="1"  shape-rendering="crispEdges"/>
<rect x="1395.19" y="39.88" width="10.87" height="10.4" fill="#D57A62"  shape-rendering="crispEdges"/>
<rect x="1385.09" y="50.28" width="10.87" height="10.87" fill="#D57A62"  shape-rendering="crispEdges"/>
<rect x="1397.5" y="52.5" width="15" height="14" fill="#B7472A" stroke="#D9826B" stroke-width="1"  shape-rendering="crispEdges"/>
<polygon points="1476.71,30.87 1493.01,30.87 1476.71,47.17" fill="#F0F0F0" />
<line x1="1481.37" y1="35.53" x2="1490.99" y2="45.31" stroke="#F0F0F0" stroke-width="4.2" />
<polygon points="1517.08,30.87 1501.55,30.87 1517.08,46.71" fill="#F0F0F0" />
<line x1="1512.42" y1="35.53" x2="1503.11" y2="45.31" stroke="#F0F0F0" stroke-width="4.2" />
<polygon points="1476.71,70.93 1476.71,56.02 1492.24,70.93" fill="#F0F0F0" />
<line x1="1481.37" y1="66.27" x2="1490.99" y2="57.27" stroke="#F0F0F0" stroke-width="4.2" />
<polygon points="1517.08,70.93 1517.08,56.02 1501.86,70.93" fill="#F0F0F0" />
<line x1="1512.42" y1="66.27" x2="1503.11" y2="57.27" stroke="#F0F0F0" stroke-width="4.2" />
<rect x="1578.5" y="31.5" width="11" height="39" fill="none" stroke="#D9826B" stroke-width="1"  shape-rendering="crispEdges"/>
<line x1="1589.5" y1="31.18" x2="1589.5" y2="70.93" stroke="#F0F0F0" stroke-width="1"  shape-rendering="crispEdges"/>
<rect x="1590.06" y="48.73" width="3.88" height="4.66" fill="#F0F0F0"  shape-rendering="crispEdges"/>
<polygon points="1592.86,40.19 1592.86,62.24 1603.73,51.06" fill="#F0F0F0" />
<rect x="1607.61" y="31.65" width="10.4" height="38.35" fill="#F0F0F0"  shape-rendering="crispEdges"/>
<rect x="1679.5" y="30.87" width="38.82" height="10.09" fill="#F0F0F0"  shape-rendering="crispEdges"/>
<polygon points="1698.91,45.31 1686.96,56.96 1711.02,56.96" fill="#F0F0F0" />
<rect x="1695.81" y="56.65" width="6.21" height="3.42" fill="#F0F0F0"  shape-rendering="crispEdges"/>
<line x1="1679.5" y1="60.5" x2="1718.32" y2="60.5" stroke="#F0F0F0" stroke-width="1"  shape-rendering="crispEdges"/>
<line x1="1679.5" y1="60.06" x2="1679.5" y2="70.47" stroke="#D9826B" stroke-width="1"  shape-rendering="crispEdges"/>
<rect x="1781.62" y="41.69" width="12.38" height="18.74" fill="none" stroke="#F0F0F0" stroke-width="3" rx="2" />
<rect x="1806.47" y="41.69" width="11.75" height="18.74" fill="none" stroke="#F0F0F0" stroke-width="3" rx="2" />
<polygon points="1790.53,57.27 1795.5,57.27 1795.5,61.93 1790.53,61.93" fill="#B7472A" />
<polyline points="1790.53,61.93 1790.53,57.73 1795.5,57.73" fill="none" stroke="#F0F0F0" stroke-width="2" />
<path d="M1790.53 37.39 Q1799.07 28.54 1807.61 35.53" fill="none" stroke="#F0F0F0" stroke-width="2.6"/>
<polygon points="1809.16,31.65 1809.47,37.86 1803.73,36.77" fill="#F0F0F0" />
<path d="M1810.71 65.34 Q1801.4 73.57 1793.63 67.36" fill="none" stroke="#F0F0F0" stroke-width="2.6"/>
<polygon points="1791.77,64.25 1791.77,70.93 1797.52,66.58" fill="#F0F0F0" />
<polygon points="1883.39,61.61 1903.88,61.61 1903.88,49.19" fill="none" stroke="#D9826B" stroke-width="1" />
<polygon points="1906.21,38.63 1906.21,61.61 1919.1,61.61" fill="#D57A62" />
<path d="M1889.6 47.95 Q1889.91 41.74 1898.45 43.29" fill="none" stroke="#D9826B" stroke-width="2"/>
<polygon points="1896.89,38.63 1901.24,43.29 1896.12,46.4" fill="#D9826B" />
<rect x="1992.86" y="44.07" width="11.18" height="1.71" fill="#FFFFFF"  shape-rendering="crispEdges"/>
<polygon points="1993.17,47.64 2004.04,47.64 1998.6,53.85" fill="#FFFFFF" />
<path d="M1811 140 Q1811 134 1808.5 130 A12 12 0 1 1 1827.5 130 Q1825 134 1825 140 Z" fill="none" stroke="#FFFFFF" stroke-width="2.2"/>
<line x1="1812" y1="144" x2="1824" y2="144" stroke="#FFFFFF" stroke-width="2.4"  shape-rendering="crispEdges"/>
<line x1="1813" y1="149" x2="1823" y2="149" stroke="#FFFFFF" stroke-width="2.4"  shape-rendering="crispEdges"/>
<rect x="2906.5" y="37.5" width="22" height="18" fill="none" stroke="#DB907C" stroke-width="1.4"  shape-rendering="crispEdges"/>
<line x1="2906.21" y1="41.5" x2="2930.04" y2="41.5" stroke="#DB907C" stroke-width="1"  shape-rendering="crispEdges"/>
<line x1="2918.5" y1="44.88" x2="2918.5" y2="56.43" stroke="#DB907C" stroke-width="1"  shape-rendering="crispEdges"/>
<polyline points="2912.71,49.5 2918.05,44.59 2923.54,49.5" fill="none" stroke="#DB907C" stroke-width="1.4" />
<line x1="2992.85" y1="47.05" x2="3013.07" y2="47.05" stroke="#DB907C" stroke-width="1.6"  shape-rendering="crispEdges"/>
<rect x="3078.5" y="42.5" width="14" height="14" fill="none" stroke="#DB907C" stroke-width="1.4"  shape-rendering="crispEdges"/>
<polyline points="3082.38,41.7 3082.38,37.23 3097.98,37.23 3097.98,52.39 3093.65,52.39" fill="none" stroke="#DB907C" stroke-width="1.4" />
<line x1="3162.96" y1="37.23" x2="3183.03" y2="56.87" stroke="#DB907C" stroke-width="1.4" />
<line x1="3183.03" y1="37.23" x2="3162.96" y2="56.87" stroke="#DB907C" stroke-width="1.4" />
<circle cx="2982.02" cy="126.47" r="10.3" fill="none" stroke="#FFFFFF" stroke-width="2.2"/>
<path d="M2966.86 151.74 A15.5 15.5 0 0 1 2989.96 139.47" fill="none" stroke="#FFFFFF" stroke-width="2.2"/>
<line x1="2984.19" y1="144.52" x2="3002.24" y2="144.52" stroke="#FFFFFF" stroke-width="2"  shape-rendering="crispEdges"/>
<line x1="2993.14" y1="135.57" x2="2993.14" y2="153.91" stroke="#FFFFFF" stroke-width="2"  shape-rendering="crispEdges"/>
<polygon points="3140.87,118.24 3174.8,118.24 3174.8,140.19 3155.31,140.19 3147.65,148.13 3147.65,140.19 3140.87,140.19" fill="none" stroke="#FFFFFF" stroke-width="2.4" stroke-linejoin="miter"/>
<line x1="246.5" y1="176" x2="246.5" y2="419" stroke="#D2D2D2" stroke-width="1" stroke-dasharray="1 1" shape-rendering="crispEdges"/>
<line x1="246.5" y1="176" x2="246.5" y2="419" stroke="#E0E0E0" stroke-width="1"  shape-rendering="crispEdges"/>
<line x1="568.5" y1="176" x2="568.5" y2="419" stroke="#D2D2D2" stroke-width="1" stroke-dasharray="1 1" shape-rendering="crispEdges"/>
<line x1="568.5" y1="176" x2="568.5" y2="419" stroke="#E0E0E0" stroke-width="1"  shape-rendering="crispEdges"/>
<line x1="1297.5" y1="176" x2="1297.5" y2="419" stroke="#D2D2D2" stroke-width="1" stroke-dasharray="1 1" shape-rendering="crispEdges"/>
<line x1="1297.5" y1="176" x2="1297.5" y2="419" stroke="#E0E0E0" stroke-width="1"  shape-rendering="crispEdges"/>
<line x1="1798.5" y1="176" x2="1798.5" y2="419" stroke="#D2D2D2" stroke-width="1" stroke-dasharray="1 1" shape-rendering="crispEdges"/>
<line x1="1798.5" y1="176" x2="1798.5" y2="419" stroke="#E0E0E0" stroke-width="1"  shape-rendering="crispEdges"/>
<line x1="2839.5" y1="176" x2="2839.5" y2="419" stroke="#D2D2D2" stroke-width="1" stroke-dasharray="1 1" shape-rendering="crispEdges"/>
<line x1="2839.5" y1="176" x2="2839.5" y2="419" stroke="#E0E0E0" stroke-width="1"  shape-rendering="crispEdges"/>
<line x1="3070.5" y1="176" x2="3070.5" y2="419" stroke="#D2D2D2" stroke-width="1" stroke-dasharray="1 1" shape-rendering="crispEdges"/>
<line x1="3070.5" y1="176" x2="3070.5" y2="419" stroke="#E0E0E0" stroke-width="1"  shape-rendering="crispEdges"/>
<rect x="52.92" y="206.03" width="54.04" height="61.92" fill="#EEC679" rx="2.5" />
<rect x="63.05" y="203.78" width="34.23" height="10.13" fill="#7F7F7F" rx="2" />
<rect x="73.18" y="198.15" width="13.51" height="9.01" fill="#7F7F7F" rx="2.5" />
<rect x="77.23" y="202.2" width="5.63" height="5.18" fill="#FFFFFF"  shape-rendering="crispEdges"/>
<polygon points="91.2,234.63 109.21,234.63 120.02,245.43 120.02,272.45 91.2,272.45" fill="#FFFFFF" stroke="#7A7A7A" stroke-width="1" />
<polyline points="109.21,234.63 109.21,245.43 120.02,245.43" fill="none" stroke="#7A7A7A" stroke-width="1" />
<line x1="31.07" y1="289.5" x2="128.8" y2="289.5" stroke="#D4D4D4" stroke-width="1"  shape-rendering="crispEdges"/>
<polygon points="76.11,349.01 85.12,349.01 80.61500000000001,354.19" fill="#555555"/>
<polygon points="162.03,192.32 164.64,193.77 176.23,208.99 183.48,217.97 179.42,220.87 171.59,212.61 163.91,200.29" fill="#A8A8A8" />
<polygon points="184.64,192.32 182.03,193.77 170.43,208.99 163.19,217.97 167.25,220.87 175.07,212.61 182.75,200.29" fill="#A8A8A8" />
<circle cx="162.9" cy="226.09" r="5.7" fill="#F1F1F1" stroke="#A8A8A8" stroke-width="2.1"/>
<circle cx="184.2" cy="226.09" r="5.7" fill="#F1F1F1" stroke="#A8A8A8" stroke-width="2.1"/>
<polygon points="153.57,260.52 166.63,260.52 173.38,267.28 173.38,288.22 153.57,288.22" fill="#F8F8F8" stroke="#BDBDBD" stroke-width="1" />
<polyline points="166.63,260.52 166.63,267.28 173.38,267.28" fill="none" stroke="#BDBDBD" stroke-width="1" />
<line x1="156.5" y1="269.5" x2="168.43" y2="269.5" stroke="#C4C4C4" stroke-width="1"  shape-rendering="crispEdges"/>
<line x1="156.5" y1="273.5" x2="168.43" y2="273.5" stroke="#C4C4C4" stroke-width="1"  shape-rendering="crispEdges"/>
<line x1="156.5" y1="277.5" x2="168.43" y2="277.5" stroke="#C4C4C4" stroke-width="1"  shape-rendering="crispEdges"/>
<line x1="156.5" y1="281.5" x2="168.43" y2="281.5" stroke="#C4C4C4" stroke-width="1"  shape-rendering="crispEdges"/>
<line x1="156.5" y1="284.5" x2="168.43" y2="284.5" stroke="#C4C4C4" stroke-width="1"  shape-rendering="crispEdges"/>
<polygon points="168.88,271.1 181.94,271.1 188.7,277.86 188.7,298.8 168.88,298.8" fill="#F8F8F8" stroke="#BDBDBD" stroke-width="1" />
<polyline points="181.94,271.1 181.94,277.86 188.7,277.86" fill="none" stroke="#BDBDBD" stroke-width="1" />
<line x1="171.81" y1="280.5" x2="185.77" y2="280.5" stroke="#C4C4C4" stroke-width="1"  shape-rendering="crispEdges"/>
<line x1="171.81" y1="284.5" x2="185.77" y2="284.5" stroke="#C4C4C4" stroke-width="1"  shape-rendering="crispEdges"/>
<line x1="171.81" y1="288.5" x2="185.77" y2="288.5" stroke="#C4C4C4" stroke-width="1"  shape-rendering="crispEdges"/>
<line x1="171.81" y1="292.5" x2="185.77" y2="292.5" stroke="#C4C4C4" stroke-width="1"  shape-rendering="crispEdges"/>
<line x1="171.81" y1="295.5" x2="185.77" y2="295.5" stroke="#C4C4C4" stroke-width="1"  shape-rendering="crispEdges"/>
<polygon points="213.92,277.63 222.92,277.63 218.42,281.91" fill="#BDBDBD"/>
<rect x="-6.5" y="-3.3" width="13" height="6.6" rx="1.8" fill="#ABABAB" transform="translate(187.25 336.52) rotate(-42)"/>
<polygon points="154.49,343.77 171.16,337.97 183.19,352.46 171.16,362.9" fill="#D6D6D6" />
<polygon points="171.16,337.25 176.23,334.35 187.39,348.84 182.75,352.46" fill="#ABABAB" />
<path d="M216.2 406.4 V397.9 H224.7" fill="none" stroke="#A8A8A8" stroke-width="1"/>
<path d="M220.7 402.4 L227.7 409.4" fill="none" stroke="#9E9E9E" stroke-width="1.2"/>
<polygon points="229.2,403.9 229.2,410.4 222.7,410.4" fill="#9E9E9E"/>
<rect x="277.91" y="205.85" width="66.11" height="54.4" fill="#FFFFFF" stroke="#808080" stroke-width="1" rx="3.5" />
<rect x="287.1" y="215.03" width="47.96" height="13.51" fill="#CDCDCD"  shape-rendering="crispEdges"/>
<line x1="291.6" y1="239.5" x2="335.06" y2="239.5" stroke="#ABABAB" stroke-width="1"  shape-rendering="crispEdges"/>
<line x1="287.1" y1="239.5" x2="288.9" y2="239.5" stroke="#ABABAB" stroke-width="1"  shape-rendering="crispEdges"/>
<line x1="291.6" y1="246.5" x2="335.06" y2="246.5" stroke="#ABABAB" stroke-width="1"  shape-rendering="crispEdges"/>
<line x1="287.1" y1="246.5" x2="288.9" y2="246.5" stroke="#ABABAB" stroke-width="1"  shape-rendering="crispEdges"/>
<line x1="271.07" y1="205.5" x2="295.47" y2="205.5" stroke="#EDBD6C" stroke-width="2.9"  shape-rendering="crispEdges"/>
<line x1="274.64" y1="196.72" x2="291.9" y2="213.98" stroke="#EDBD6C" stroke-width="2.9" />
<line x1="283.5" y1="193.15" x2="283.5" y2="217.55" stroke="#EDBD6C" stroke-width="2.9"  shape-rendering="crispEdges"/>
<line x1="291.9" y1="196.72" x2="274.64" y2="213.98" stroke="#EDBD6C" stroke-width="2.9" />
<circle cx="283.27" cy="205.35" r="3.2" fill="#FFFFFF"/>
<line x1="262.33" y1="289.5" x2="359.6" y2="289.5" stroke="#D4D4D4" stroke-width="1"  shape-rendering="crispEdges"/>
<polygon points="342.94,349.01 351.72,349.01 347.33000000000004,354.19" fill="#555555"/>
<rect x="384.87" y="197.97" width="40.21" height="31.88" fill="#FFFFFF" stroke="#7A7A7A" stroke-width="1" rx="2.5" />
<rect x="388.43" y="201.52" width="33.33" height="6.3" fill="#CDCDCD"  shape-rendering="crispEdges"/>
<rect x="388.43" y="211.21" width="13.06" height="15.09" fill="#CDCDCD"  shape-rendering="crispEdges"/>
<line x1="405.31" y1="211.5" x2="418.37" y2="211.5" stroke="#8E8E8E" stroke-width="1"  shape-rendering="crispEdges"/>
<line x1="405.31" y1="215.5" x2="418.37" y2="215.5" stroke="#8E8E8E" stroke-width="1"  shape-rendering="crispEdges"/>
<line x1="405.31" y1="219.5" x2="418.37" y2="219.5" stroke="#8E8E8E" stroke-width="1"  shape-rendering="crispEdges"/>
<line x1="405.31" y1="223.5" x2="411.62" y2="223.5" stroke="#8E8E8E" stroke-width="1"  shape-rendering="crispEdges"/>
<polygon points="533.66,210.53 542.0,210.53 537.8299999999999,215.26" fill="#555555"/>
<rect x="388.93" y="266.87" width="32.32" height="26.03" fill="#FFFFFF" stroke="#7A7A7A" stroke-width="1" rx="2.5" />
<rect x="403.06" y="269.53" width="15.76" height="5.18" fill="#CDCDCD"  shape-rendering="crispEdges"/>
<rect x="391.8" y="277.63" width="10.13" height="12.16" fill="#CDCDCD"  shape-rendering="crispEdges"/>
<line x1="405.31" y1="279.5" x2="418.37" y2="279.5" stroke="#ABABAB" stroke-width="1"  shape-rendering="crispEdges"/>
<line x1="405.31" y1="282.5" x2="418.37" y2="282.5" stroke="#ABABAB" stroke-width="1"  shape-rendering="crispEdges"/>
<line x1="405.31" y1="286.5" x2="418.37" y2="286.5" stroke="#ABABAB" stroke-width="1"  shape-rendering="crispEdges"/>
<line x1="405.31" y1="289.5" x2="418.37" y2="289.5" stroke="#ABABAB" stroke-width="1"  shape-rendering="crispEdges"/>
<rect x="383.92" y="261.2" width="21.39" height="14.64" fill="#F1F1F1"  shape-rendering="crispEdges"/>
<path d="M406.67 274.03 A8.6 8.6 0 0 0 390.68 270.2" fill="none" stroke="#4A7EBB" stroke-width="4.4"/>
<polygon points="385.5,261.87 385.05,276.28 398.56,275.83" fill="#4A7EBB" />
<clipPath id="csec"><rect x="380" y="324.3" width="50" height="46"/></clipPath>
<g clip-path="url(#csec)">
<rect x="400.18" y="314.61" width="26.03" height="20.39" fill="#FFFFFF" stroke="#7A7A7A" stroke-width="1" rx="2" />
</g>
<rect x="387.5" y="338.5" width="38" height="5" fill="#F1F1F1" stroke="#D9694A" stroke-width="1"  shape-rendering="crispEdges"/>
<rect x="386.17" y="337.08" width="2.48" height="7.43" fill="#F1F1F1"  shape-rendering="crispEdges"/>
<rect x="400.18" y="347.26" width="26.03" height="19.72" fill="#FFFFFF" stroke="#7A7A7A" stroke-width="1" rx="2" />
<rect x="403.06" y="350.14" width="19.82" height="4.5" fill="#CDCDCD"  shape-rendering="crispEdges"/>
<line x1="380.48" y1="333.5" x2="397.28" y2="333.5" stroke="#EDBD6C" stroke-width="2.9"  shape-rendering="crispEdges"/>
<line x1="382.94" y1="327.76" x2="394.82" y2="339.64" stroke="#EDBD6C" stroke-width="2.9" />
<line x1="388.5" y1="325.3" x2="388.5" y2="342.1" stroke="#EDBD6C" stroke-width="2.9"  shape-rendering="crispEdges"/>
<line x1="394.82" y1="327.76" x2="382.94" y2="339.64" stroke="#EDBD6C" stroke-width="2.9" />
<circle cx="388.88" cy="333.7" r="2.2" fill="#FFFFFF"/>
<polygon points="542.22,342.93 551.23,342.93 546.725,347.89" fill="#555555"/>
<rect x="577.5" y="206.5" width="386" height="56" fill="#FFFFFF" stroke="#C6C6C6" stroke-width="1"  shape-rendering="crispEdges"/>
<rect x="964.5" y="206.5" width="96" height="56" fill="#FFFFFF" stroke="#C6C6C6" stroke-width="1"  shape-rendering="crispEdges"/>
<polygon points="947.75,232.6 956.98,232.6 952.365,236.88" fill="#BDBDBD"/>
<polygon points="1044.58,232.6 1054.26,232.6 1049.42,236.88" fill="#BDBDBD"/>
<line x1="754.1" y1="337.5" x2="776.84" y2="337.5" stroke="#A8A8A8" stroke-width="1"  shape-rendering="crispEdges"/>
<line x1="900" y1="326.5" x2="938.5" y2="326.5" stroke="#A8A8A8" stroke-width="1"  shape-rendering="crispEdges"/>
<line x1="976.57" y1="338.5" x2="1013.05" y2="338.5" stroke="#A8A8A8" stroke-width="2.6"  shape-rendering="crispEdges"/>
<polyline points="980.63,332.58 974.32,338.43 980.63,344.29" fill="none" stroke="#A8A8A8" stroke-width="2.6" />
<polyline points="1009.22,332.58 1015.53,338.43 1009.22,344.29" fill="none" stroke="#A8A8A8" stroke-width="2.6" />
<polygon points="1024.31,321.32 1032.87,321.32 1028.59,325.82" fill="#BDBDBD"/>
<polygon points="1107.17,321.32 1115.73,321.32 1111.45,325.82" fill="#BDBDBD"/>
<polygon points="1105.03,219.54 1116.29,219.54 1110.6599999999999,214.58" fill="#BDBDBD"/>
<polygon points="1180.92,213.91 1192.4,213.91 1186.66,219.54" fill="#BDBDBD"/>
<rect x="-12.5" y="-6.5" width="25" height="13" rx="3" fill="#CDCDCD" transform="translate(1255.45 239.8) rotate(-42)"/>
<line x1="1173.71" y1="310.73" x2="1148.27" y2="336.18" stroke="#A8A8A8" stroke-width="4.5" />
<polygon points="1148.27,333.25 1151.2,336.63 1143.76,340.68" fill="#A8A8A8" />
<polygon points="1191.73,321.32 1201.41,321.32 1196.5700000000002,325.82" fill="#BDBDBD"/>
<polygon points="1274.37,321.32 1284.05,321.32 1279.21,325.82" fill="#BDBDBD"/>
<path d="M1267.5 406.4 V397.9 H1276" fill="none" stroke="#A8A8A8" stroke-width="1"/>
<path d="M1272 402.4 L1279 409.4" fill="none" stroke="#9E9E9E" stroke-width="1.2"/>
<polygon points="1280.5,403.9 1280.5,410.4 1274,410.4" fill="#9E9E9E"/>
<circle cx="1325.71" cy="222.92" r="2.9" fill="#B4B4B4"/>
<line x1="1334.04" y1="223.5" x2="1357.23" y2="223.5" stroke="#B4B4B4" stroke-width="1"  shape-rendering="crispEdges"/>
<circle cx="1325.71" cy="235.08" r="2.9" fill="#B4B4B4"/>
<line x1="1334.04" y1="235.5" x2="1357.23" y2="235.5" stroke="#B4B4B4" stroke-width="1"  shape-rendering="crispEdges"/>
<circle cx="1325.71" cy="247.23" r="2.9" fill="#B4B4B4"/>
<line x1="1334.04" y1="247.5" x2="1357.23" y2="247.5" stroke="#B4B4B4" stroke-width="1"  shape-rendering="crispEdges"/>
<polygon points="1374.79,232.6 1384.25,232.6 1379.52,236.88" fill="#BDBDBD"/>
<line x1="1415.33" y1="220.5" x2="1442.8" y2="220.5" stroke="#B4B4B4" stroke-width="1"  shape-rendering="crispEdges"/>
<line x1="1415.33" y1="234.5" x2="1442.8" y2="234.5" stroke="#B4B4B4" stroke-width="1"  shape-rendering="crispEdges"/>
<line x1="1415.33" y1="248.5" x2="1442.8" y2="248.5" stroke="#B4B4B4" stroke-width="1"  shape-rendering="crispEdges"/>
<polygon points="1457.88,232.6 1467.12,232.6 1462.5,236.88" fill="#BDBDBD"/>
<line x1="1488.96" y1="219.5" x2="1531.07" y2="219.5" stroke="#B4B4B4" stroke-width="1"  shape-rendering="crispEdges"/>
<line x1="1488.96" y1="249.5" x2="1531.07" y2="249.5" stroke="#B4B4B4" stroke-width="1"  shape-rendering="crispEdges"/>
<line x1="1510.8" y1="224.5" x2="1531.07" y2="224.5" stroke="#B4B4B4" stroke-width="1"  shape-rendering="crispEdges"/>
<line x1="1510.8" y1="229.5" x2="1531.07" y2="229.5" stroke="#B4B4B4" stroke-width="1"  shape-rendering="crispEdges"/>
<line x1="1510.8" y1="234.5" x2="1531.07" y2="234.5" stroke="#B4B4B4" stroke-width="1"  shape-rendering="crispEdges"/>
<line x1="1510.8" y1="239.5" x2="1531.07" y2="239.5" stroke="#B4B4B4" stroke-width="1"  shape-rendering="crispEdges"/>
<line x1="1510.8" y1="244.5" x2="1531.07" y2="244.5" stroke="#B4B4B4" stroke-width="1"  shape-rendering="crispEdges"/>
<line x1="1565.07" y1="219.5" x2="1607.17" y2="219.5" stroke="#B4B4B4" stroke-width="1"  shape-rendering="crispEdges"/>
<line x1="1565.07" y1="249.5" x2="1607.17" y2="249.5" stroke="#B4B4B4" stroke-width="1"  shape-rendering="crispEdges"/>
<line x1="1586.91" y1="224.5" x2="1607.17" y2="224.5" stroke="#B4B4B4" stroke-width="1"  shape-rendering="crispEdges"/>
<line x1="1586.91" y1="229.5" x2="1607.17" y2="229.5" stroke="#B4B4B4" stroke-width="1"  shape-rendering="crispEdges"/>
<line x1="1586.91" y1="234.5" x2="1607.17" y2="234.5" stroke="#B4B4B4" stroke-width="1"  shape-rendering="crispEdges"/>
<line x1="1586.91" y1="239.5" x2="1607.17" y2="239.5" stroke="#B4B4B4" stroke-width="1"  shape-rendering="crispEdges"/>
<line x1="1586.91" y1="244.5" x2="1607.17" y2="244.5" stroke="#B4B4B4" stroke-width="1"  shape-rendering="crispEdges"/>
<polygon points="1488.96,234.17 1500.22,224.04 1504.72,228.1 1501.34,230.8 1509.22,230.8 1509.22,237.55 1501.34,237.55 1504.72,240.25 1500.22,244.31" fill="#B4B4B4" />
<polygon points="1585.78,234.17 1574.52,224.04 1570.02,228.1 1573.4,230.8 1565.07,230.8 1565.07,237.55 1573.4,237.55 1570.02,240.25 1574.52,244.31" fill="#B4B4B4" />
<line x1="1326.16" y1="310.5" x2="1361.73" y2="310.5" stroke="#B4B4B4" stroke-width="1"  shape-rendering="crispEdges"/>
<line x1="1400.01" y1="311.5" x2="1440.09" y2="311.5" stroke="#B4B4B4" stroke-width="1"  shape-rendering="crispEdges"/>
<line x1="1478.15" y1="310.5" x2="1514.18" y2="310.5" stroke="#B4B4B4" stroke-width="1"  shape-rendering="crispEdges"/>
<line x1="1326.16" y1="315.5" x2="1352.05" y2="315.5" stroke="#B4B4B4" stroke-width="1"  shape-rendering="crispEdges"/>
<line x1="1403.39" y1="316.5" x2="1436.72" y2="316.5" stroke="#B4B4B4" stroke-width="1"  shape-rendering="crispEdges"/>
<line x1="1487.83" y1="315.5" x2="1514.18" y2="315.5" stroke="#B4B4B4" stroke-width="1"  shape-rendering="crispEdges"/>
<line x1="1326.16" y1="320.5" x2="1361.73" y2="320.5" stroke="#B4B4B4" stroke-width="1"  shape-rendering="crispEdges"/>
<line x1="1400.01" y1="321.5" x2="1440.09" y2="321.5" stroke="#B4B4B4" stroke-width="1"  shape-rendering="crispEdges"/>
<line x1="1478.15" y1="320.5" x2="1514.18" y2="320.5" stroke="#B4B4B4" stroke-width="1"  shape-rendering="crispEdges"/>
<line x1="1326.16" y1="325.5" x2="1352.05" y2="325.5" stroke="#B4B4B4" stroke-width="1"  shape-rendering="crispEdges"/>
<line x1="1403.39" y1="326.5" x2="1436.72" y2="326.5" stroke="#B4B4B4" stroke-width="1"  shape-rendering="crispEdges"/>
<line x1="1487.83" y1="325.5" x2="1514.18" y2="325.5" stroke="#B4B4B4" stroke-width="1"  shape-rendering="crispEdges"/>
<line x1="1326.16" y1="330.5" x2="1361.73" y2="330.5" stroke="#B4B4B4" stroke-width="1"  shape-rendering="crispEdges"/>
<line x1="1400.01" y1="331.5" x2="1440.09" y2="331.5" stroke="#B4B4B4" stroke-width="1"  shape-rendering="crispEdges"/>
<line x1="1478.15" y1="330.5" x2="1514.18" y2="330.5" stroke="#B4B4B4" stroke-width="1"  shape-rendering="crispEdges"/>
<line x1="1326.16" y1="335.5" x2="1352.05" y2="335.5" stroke="#B4B4B4" stroke-width="1"  shape-rendering="crispEdges"/>
<line x1="1403.39" y1="336.5" x2="1436.72" y2="336.5" stroke="#B4B4B4" stroke-width="1"  shape-rendering="crispEdges"/>
<line x1="1487.83" y1="335.5" x2="1514.18" y2="335.5" stroke="#B4B4B4" stroke-width="1"  shape-rendering="crispEdges"/>
<line x1="1556.06" y1="312.5" x2="1588.03" y2="312.5" stroke="#B4B4B4" stroke-width="1"  shape-rendering="crispEdges"/>
<line x1="1556.06" y1="316.5" x2="1588.03" y2="316.5" stroke="#B4B4B4" stroke-width="1"  shape-rendering="crispEdges"/>
<line x1="1556.06" y1="320.5" x2="1588.03" y2="320.5" stroke="#B4B4B4" stroke-width="1"  shape-rendering="crispEdges"/>
<line x1="1556.06" y1="324.5" x2="1588.03" y2="324.5" stroke="#B4B4B4" stroke-width="1"  shape-rendering="crispEdges"/>
<line x1="1556.06" y1="328.5" x2="1588.03" y2="328.5" stroke="#B4B4B4" stroke-width="1"  shape-rendering="crispEdges"/>
<line x1="1556.06" y1="332.5" x2="1588.03" y2="332.5" stroke="#B4B4B4" stroke-width="1"  shape-rendering="crispEdges"/>
<rect x="1648.94" y="224.04" width="4.5" height="21.39" fill="#B4B4B4"  shape-rendering="crispEdges"/>
<polygon points="1651.2,216.84 1645.12,226.29 1657.5,226.29" fill="#B4B4B4" />
<polygon points="1651.2,252.19 1645.12,242.51 1657.5,242.51" fill="#B4B4B4" />
<line x1="1660.2" y1="226.5" x2="1680.02" y2="226.5" stroke="#B4B4B4" stroke-width="1"  shape-rendering="crispEdges"/>
<line x1="1660.2" y1="230.5" x2="1680.02" y2="230.5" stroke="#B4B4B4" stroke-width="1"  shape-rendering="crispEdges"/>
<line x1="1660.2" y1="234.5" x2="1680.02" y2="234.5" stroke="#B4B4B4" stroke-width="1"  shape-rendering="crispEdges"/>
<line x1="1660.2" y1="238.5" x2="1680.02" y2="238.5" stroke="#B4B4B4" stroke-width="1"  shape-rendering="crispEdges"/>
<line x1="1660.2" y1="242.5" x2="1680.02" y2="242.5" stroke="#B4B4B4" stroke-width="1"  shape-rendering="crispEdges"/>
<polygon points="1691.05,232.6 1700.06,232.6 1695.5549999999998,236.88" fill="#BDBDBD"/>
<line x1="1725.5" y1="189.82" x2="1725.5" y2="236.43" stroke="#B4B4B4" stroke-width="1"  shape-rendering="crispEdges"/>
<polyline points="1723.25,233.05 1725.5,236.88 1727.76,233.05" fill="none" stroke="#B4B4B4" stroke-width="1.1" />
<line x1="1733.5" y1="189.82" x2="1733.5" y2="236.43" stroke="#B4B4B4" stroke-width="1"  shape-rendering="crispEdges"/>
<polyline points="1731.13,233.05 1733.38,236.88 1735.64,233.05" fill="none" stroke="#B4B4B4" stroke-width="1.1" />
<line x1="1741.5" y1="189.82" x2="1741.5" y2="236.43" stroke="#B4B4B4" stroke-width="1"  shape-rendering="crispEdges"/>
<polyline points="1739.01,233.05 1741.27,236.88 1743.52,233.05" fill="none" stroke="#B4B4B4" stroke-width="1.1" />
<line x1="1749.5" y1="215.03" x2="1749.5" y2="236.43" stroke="#B4B4B4" stroke-width="1"  shape-rendering="crispEdges"/>
<polyline points="1747.35,233.05 1749.6,236.88 1751.85,233.05" fill="none" stroke="#B4B4B4" stroke-width="1.1" />
<line x1="1757.5" y1="215.03" x2="1757.5" y2="236.43" stroke="#B4B4B4" stroke-width="1"  shape-rendering="crispEdges"/>
<polyline points="1755.23,233.05 1757.48,236.88 1759.73,233.05" fill="none" stroke="#B4B4B4" stroke-width="1.1" />
<line x1="1765.5" y1="215.03" x2="1765.5" y2="236.43" stroke="#B4B4B4" stroke-width="1"  shape-rendering="crispEdges"/>
<polyline points="1763.33,233.05 1765.58,236.88 1767.84,233.05" fill="none" stroke="#B4B4B4" stroke-width="1.1" />
<polygon points="1773.92,210.08 1783.37,210.08 1778.645,214.58" fill="#BDBDBD"/>
<rect x="1724.5" y="263.5" width="40" height="31" fill="#E9E9E9" stroke="#C8C8C8" stroke-width="1"  shape-rendering="crispEdges"/>
<rect x="1742.39" y="262.32" width="5.18" height="10.13" fill="#B4B4B4"  shape-rendering="crispEdges"/>
<polygon points="1745.09,256.24 1737.44,266.37 1752.52,266.37" fill="#B4B4B4" />
<rect x="1742.39" y="287.09" width="5.18" height="9.46" fill="#B4B4B4"  shape-rendering="crispEdges"/>
<polygon points="1745.09,302.85 1737.44,292.95 1752.52,292.95" fill="#B4B4B4" />
<line x1="1732.26" y1="275.5" x2="1759.28" y2="275.5" stroke="#B4B4B4" stroke-width="1"  shape-rendering="crispEdges"/>
<line x1="1732.26" y1="279.5" x2="1759.28" y2="279.5" stroke="#B4B4B4" stroke-width="1"  shape-rendering="crispEdges"/>
<line x1="1732.26" y1="283.5" x2="1759.28" y2="283.5" stroke="#B4B4B4" stroke-width="1"  shape-rendering="crispEdges"/>
<polygon points="1773.92,277.41 1783.37,277.41 1778.645,281.91" fill="#BDBDBD"/>
<rect x="1632.5" y="303.5" width="32" height="40" fill="#ECECEC" stroke="#C4C4C4" stroke-width="1"  shape-rendering="crispEdges"/>
<line x1="1636.56" y1="312.5" x2="1646.69" y2="312.5" stroke="#B4B4B4" stroke-width="1"  shape-rendering="crispEdges"/>
<line x1="1650.07" y1="312.5" x2="1660.65" y2="312.5" stroke="#B4B4B4" stroke-width="1"  shape-rendering="crispEdges"/>
<line x1="1636.56" y1="317.5" x2="1646.69" y2="317.5" stroke="#B4B4B4" stroke-width="1"  shape-rendering="crispEdges"/>
<line x1="1650.07" y1="317.5" x2="1660.65" y2="317.5" stroke="#B4B4B4" stroke-width="1"  shape-rendering="crispEdges"/>
<line x1="1636.56" y1="321.5" x2="1646.69" y2="321.5" stroke="#B4B4B4" stroke-width="1"  shape-rendering="crispEdges"/>
<line x1="1650.07" y1="321.5" x2="1660.65" y2="321.5" stroke="#B4B4B4" stroke-width="1"  shape-rendering="crispEdges"/>
<line x1="1636.56" y1="325.5" x2="1646.69" y2="325.5" stroke="#B4B4B4" stroke-width="1"  shape-rendering="crispEdges"/>
<line x1="1650.07" y1="325.5" x2="1660.65" y2="325.5" stroke="#B4B4B4" stroke-width="1"  shape-rendering="crispEdges"/>
<line x1="1636.56" y1="329.5" x2="1646.69" y2="329.5" stroke="#B4B4B4" stroke-width="1"  shape-rendering="crispEdges"/>
<line x1="1650.07" y1="329.5" x2="1660.65" y2="329.5" stroke="#B4B4B4" stroke-width="1"  shape-rendering="crispEdges"/>
<line x1="1636.56" y1="333.5" x2="1646.69" y2="333.5" stroke="#B4B4B4" stroke-width="1"  shape-rendering="crispEdges"/>
<line x1="1650.07" y1="333.5" x2="1660.65" y2="333.5" stroke="#B4B4B4" stroke-width="1"  shape-rendering="crispEdges"/>
<polygon points="1677.09,321.32 1686.1,321.32 1681.5949999999998,325.82" fill="#BDBDBD"/>
<polygon points="1722.58,329.2 1750.27,329.2 1761.08,340.46 1750.27,354.64 1722.58,354.64 1733.38,341.58" fill="#C8C8C8" />
<rect x="1737.5" y="342.5" width="28" height="19" fill="#F2F2F2" stroke="#C4C4C4" stroke-width="1"  shape-rendering="crispEdges"/>
<line x1="1746.89" y1="348.5" x2="1761.53" y2="348.5" stroke="#B4B4B4" stroke-width="1"  shape-rendering="crispEdges"/>
<line x1="1742.39" y1="348.5" x2="1744.19" y2="348.5" stroke="#B4B4B4" stroke-width="1"  shape-rendering="crispEdges"/>
<line x1="1746.89" y1="352.5" x2="1761.53" y2="352.5" stroke="#B4B4B4" stroke-width="1"  shape-rendering="crispEdges"/>
<line x1="1742.39" y1="352.5" x2="1744.19" y2="352.5" stroke="#B4B4B4" stroke-width="1"  shape-rendering="crispEdges"/>
<line x1="1746.89" y1="356.5" x2="1761.53" y2="356.5" stroke="#B4B4B4" stroke-width="1"  shape-rendering="crispEdges"/>
<line x1="1742.39" y1="356.5" x2="1744.19" y2="356.5" stroke="#B4B4B4" stroke-width="1"  shape-rendering="crispEdges"/>
<polygon points="1773.92,342.93 1783.37,342.93 1778.645,347.44" fill="#BDBDBD"/>
<path d="M1768.1 406.4 V397.9 H1776.6" fill="none" stroke="#A8A8A8" stroke-width="1"/>
<path d="M1772.6 402.4 L1779.6 409.4" fill="none" stroke="#9E9E9E" stroke-width="1.2"/>
<polygon points="1781.1,403.9 1781.1,410.4 1774.6,410.4" fill="#9E9E9E"/>
<rect x="1808.5" y="190.5" width="514" height="153" fill="#FFFFFF" stroke="#ABABAB" stroke-width="1"  shape-rendering="crispEdges"/>
<line x1="2254.5" y1="190.72" x2="2254.5" y2="344.06" stroke="#D6D6D6" stroke-width="1"  shape-rendering="crispEdges"/>
<rect x="1828.5" y="214.5" width="35" height="30" fill="#FFFFFF" stroke="#5E5E5E" stroke-width="1"  shape-rendering="crispEdges"/>
<line x1="1844.17" y1="220.5" x2="1859.93" y2="220.5" stroke="#9A9A9A" stroke-width="1"  shape-rendering="crispEdges"/>
<line x1="1844.17" y1="224.5" x2="1859.93" y2="224.5" stroke="#9A9A9A" stroke-width="1"  shape-rendering="crispEdges"/>
<line x1="1844.17" y1="227.5" x2="1859.93" y2="227.5" stroke="#9A9A9A" stroke-width="1"  shape-rendering="crispEdges"/>
<line x1="1844.17" y1="230.5" x2="1859.93" y2="230.5" stroke="#9A9A9A" stroke-width="1"  shape-rendering="crispEdges"/>
<line x1="1832.01" y1="234.5" x2="1859.93" y2="234.5" stroke="#9A9A9A" stroke-width="1"  shape-rendering="crispEdges"/>
<line x1="1832.01" y1="238.5" x2="1859.93" y2="238.5" stroke="#9A9A9A" stroke-width="1"  shape-rendering="crispEdges"/>
<line x1="1901.81" y1="211.66" x2="1938.29" y2="248.14" stroke="#5E5E5E" stroke-width="1.1" />
<line x1="1975.9" y1="211.66" x2="2011.47" y2="247.23" stroke="#5E5E5E" stroke-width="1.1" />
<polyline points="2011.93,241.16 2011.93,247.69 2005.4,247.69" fill="none" stroke="#5E5E5E" stroke-width="1.1" />
<rect x="2050.5" y="216.5" width="35" height="25" fill="none" stroke="#5E5E5E" stroke-width="1.1"  shape-rendering="crispEdges"/>
<polygon points="1845.97,286.42 1829.08,321.54 1862.86,321.54" fill="none" stroke="#5E5E5E" stroke-width="1.1" />
<polyline points="1901.81,290.47 1918.48,290.47 1918.48,317.94 1938.29,317.94" fill="none" stroke="#5E5E5E" stroke-width="1.1" />
<polyline points="1975.9,290.47 1992.34,290.47 1992.34,317.94 2011.47,317.94" fill="none" stroke="#5E5E5E" stroke-width="1.1" />
<polyline points="2006.97,314.11 2012.15,317.94 2006.97,321.54" fill="none" stroke="#5E5E5E" stroke-width="1.1" />
<polygon points="2050.2,297.22 2067.32,297.22 2067.32,286.42 2085.33,304.2 2067.32,321.99 2067.32,311.18 2050.2,311.18" fill="none" stroke="#5E5E5E" stroke-width="1.1" />
<ellipse cx="2141.92" cy="229.45" rx="17.5" ry="14" fill="none" stroke="#5E5E5E" stroke-width="1.1"/>
<rect x="2198.77" y="216.71" width="34.92" height="25.47" fill="none" stroke="#5E5E5E" stroke-width="1.1" rx="3.5" />
<polygon points="2135.17,286.42 2148.68,286.42 2148.68,303.53 2159.94,303.53 2141.92,321.32 2123.91,303.53 2135.17,303.53" fill="none" stroke="#5E5E5E" stroke-width="1.1" />
<path d="M2198.22 298.8 L2207.22 288.67 L2225.91 288.67 Q2215.1 298.35 2225.24 303.3 L2230.42 303.3 Q2234.24 303.3 2234.24 307.36 L2234.24 315.91 Q2234.24 319.74 2230.42 319.74 L2202.04 319.74 Q2198.22 319.74 2198.22 315.91 Z" fill="none" stroke="#5E5E5E" stroke-width="1.1"/>
<polygon points="2280.41,262.32 2297.97,262.32 2289.19,271.78" fill="#777777" />
<rect x="2349.5" y="195.5" width="31" height="31" fill="#FFFFFF" stroke="#8C8C8C" stroke-width="1"  shape-rendering="crispEdges"/>
<rect x="2362.14" y="208.28" width="43.91" height="43.91" fill="#EEC679"  shape-rendering="crispEdges"/>
<rect x="2349.5" y="195.5" width="31" height="31" fill="#FFFFFF" stroke="#8C8C8C" stroke-width="1"  shape-rendering="crispEdges"/>
<rect x="2387.5" y="233.5" width="31" height="31" fill="#FFFFFF" stroke="#8C8C8C" stroke-width="1"  shape-rendering="crispEdges"/>
<polygon points="2380.16,337.76 2388.94,337.76 2384.55,342.93" fill="#555555"/>
<rect x="2466.8" y="198.76" width="62.52" height="62.65" fill="#F7F7F7" stroke="#C4C4C4" stroke-width="1" rx="10.5" />
<polygon points="2537.65,216.26 2537.65,231.13 2528.91,242.61 2521.08,236.35" fill="#ABABAB" />
<polygon points="2519.78,238.04 2527.61,244.17 2518.08,252.0 2511.95,245.21" fill="#ABABAB" />
<path d="M2483.26 269.74 Q2493.04 263.47 2499.56 254.34 Q2504.78 246.52 2511.04 249.13 Q2516.52 253.04 2512.61 262.17 Q2508.69 270.0 2500.87 269.74 Z" fill="#FAFAFA" stroke="#ABABAB" stroke-width="1"/>
<path d="M2483.26 269.74 Q2491.74 264.78 2495.65 259.56 Q2502.17 254.34 2507.39 260.87 Q2508.69 270.0 2500.87 269.74 Z" fill="#ABABAB"/>
<polygon points="2535.98,337.76 2544.99,337.76 2540.4849999999997,342.93" fill="#BDBDBD"/>
<polygon points="2574.56,207.39 2588.25,193.04 2602.6,207.39 2588.25,221.74" fill="#F7F7F7" stroke="#ABABAB" stroke-width="1" />
<path d="M2583.3 199.56 V191.09 A4.7 4.7 0 0 1 2592.82 191.09 V200.87" fill="none" stroke="#ABABAB" stroke-width="1"/>
<circle cx="2592.56" cy="201.52" r="1.7" fill="#C8C8C8" stroke="#ABABAB" stroke-width="0.8"/>
<path d="M2601.95 201.52 Q2612.38 203.48 2605.6 222.39 Q2605.86 211.3 2602.86 207.65 Z" fill="#ABABAB"/>
<polygon points="2754.36,201.83 2764.02,201.83 2759.19,207.05" fill="#BDBDBD"/>
<polyline points="2604.56,249.13 2566.34,249.13 2566.34,280.69 2579.12,280.69" fill="none" stroke="#ABABAB" stroke-width="1" />
<polygon points="2605.86,252.78 2609.38,256.3 2587.21,278.47 2583.3,274.95" fill="#ABABAB" />
<polygon points="2607.17,251.48 2608.86,250.17 2611.99,253.3 2610.69,255.0" fill="#ABABAB" />
<polygon points="2582.39,276.26 2586.3,279.39 2580.43,281.21" fill="#ABABAB" />
<polygon points="2815.67,264.44 2825.33,264.44 2820.5,269.66" fill="#BDBDBD"/>
<polygon points="2585.65,317.6 2602.34,317.6 2611.47,325.82 2605.47,345.38 2584.99,346.3 2576.78,338.08" fill="#B4B4B4" stroke="#B4B4B4" stroke-width="2.5" stroke-linejoin="round"/>
<polygon points="2586.3,318.25 2601.95,318.25 2596.73,337.17 2578.47,337.17" fill="#F7F7F7" stroke="#F7F7F7" stroke-width="2" stroke-linejoin="round"/>
<polygon points="2603.91,320.21 2610.17,326.34 2604.95,343.3 2598.69,337.82" fill="#C8C8C8"/>
<polygon points="2807.85,329.14 2816.98,329.14 2812.415,334.36" fill="#BDBDBD"/>
<path d="M2809.5 406.4 V397.9 H2818" fill="none" stroke="#A8A8A8" stroke-width="1"/>
<path d="M2814 402.4 L2821 409.4" fill="none" stroke="#9E9E9E" stroke-width="1.2"/>
<polygon points="2822.5,403.9 2822.5,410.4 2816,410.4" fill="#9E9E9E"/>
<line x1="2878.81" y1="216.44" x2="2868.64" y2="225.05" stroke="#4A7EBB" stroke-width="5.6" stroke-linecap="round"/>
<circle cx="2890.81" cy="203.92" r="13.6" fill="#FFFFFF" stroke="#4A7EBB" stroke-width="3"/>
<polyline points="2863.16,277.49 2863.16,283.75 2876.2,283.75" fill="none" stroke="#4A7EBB" stroke-width="2.6" />
<polyline points="2871.77,279.05 2876.72,283.75 2871.77,288.45" fill="none" stroke="#4A7EBB" stroke-width="2.6" />
<polygon points="3037.43,267.05 3047.35,267.05 3042.39,272.27" fill="#555555"/>
<polygon points="2875.16,310.88 2875.16,348.71 2884.81,340.1 2891.33,353.93 2897.33,351.32 2890.55,337.75 2901.77,334.88" fill="#FFFFFF" stroke="#5E5E5E" stroke-width="1.1" />
<polygon points="3003.52,329.14 3013.43,329.14 3008.475,334.36" fill="#555555"/>
<polyline points="3174.5,406.5 3182,399 3189.5,406.5" fill="none" stroke="#777777" stroke-width="3"/>
<path d="M221.41 1687.61 Q215.65 1685.76 205.33 1686.52 V1660.54 Q215.65 1659.89 221.41 1662.39 Q227.07 1659.89 237.72 1660.54 V1686.52 Q227.07 1685.76 221.41 1687.61 V1662.39" fill="none" stroke="#6A6A6A" stroke-width="1"/>
<polyline points="225.65,1674.13 230.87,1679.57 239.57,1667.5" fill="none" stroke="#6A6A6A" stroke-width="3.2" />
<polygon points="2289.7,1668.64 2304.12,1668.64 2297.0,1661.89" fill="#4A4A4A" />
<line x1="2284.05" y1="1673.5" x2="2309.77" y2="1673.5" stroke="#5A5A5A" stroke-width="1"  shape-rendering="crispEdges"/>
<line x1="2284.05" y1="1677.5" x2="2309.77" y2="1677.5" stroke="#5A5A5A" stroke-width="1"  shape-rendering="crispEdges"/>
<line x1="2284.05" y1="1681.5" x2="2309.77" y2="1681.5" stroke="#5A5A5A" stroke-width="1"  shape-rendering="crispEdges"/>
<line x1="2284.05" y1="1685.5" x2="2309.77" y2="1685.5" stroke="#5A5A5A" stroke-width="1"  shape-rendering="crispEdges"/>
<line x1="2284.05" y1="1689.5" x2="2297.73" y2="1689.5" stroke="#5A5A5A" stroke-width="1"  shape-rendering="crispEdges"/>
<rect x="2429" y="1637" width="76" height="79" fill="#C8C8C8"  shape-rendering="crispEdges"/>
<rect x="2450.5" y="1660.5" width="32" height="30" fill="none" stroke="#6A6A6A" stroke-width="1.1"  shape-rendering="crispEdges"/>
<line x1="2458.5" y1="1660.8" x2="2458.5" y2="1691.09" stroke="#6A6A6A" stroke-width="1"  shape-rendering="crispEdges"/>
<line x1="2458.47" y1="1681.5" x2="2482.73" y2="1681.5" stroke="#6A6A6A" stroke-width="1"  shape-rendering="crispEdges"/>
<rect x="2464.5" y="1667.5" width="12" height="8" fill="none" stroke="#6A6A6A" stroke-width="1.1"  shape-rendering="crispEdges"/>
<rect x="2526.5" y="1661.5" width="12" height="10" fill="none" stroke="#6A6A6A" stroke-width="1.1"  shape-rendering="crispEdges"/>
<rect x="2526.5" y="1679.5" width="12" height="10" fill="none" stroke="#6A6A6A" stroke-width="1.1"  shape-rendering="crispEdges"/>
<rect x="2544.5" y="1661.5" width="13" height="10" fill="none" stroke="#6A6A6A" stroke-width="1.1"  shape-rendering="crispEdges"/>
<rect x="2544.5" y="1679.5" width="13" height="10" fill="none" stroke="#6A6A6A" stroke-width="1.1"  shape-rendering="crispEdges"/>
<path d="M2618.48 1691.09 Q2611.18 1687.8 2602.06 1688.9 V1662.62 Q2611.18 1661.53 2618.48 1665.18 Q2625.77 1661.53 2634.9 1662.62 V1688.9 Q2625.77 1687.8 2618.48 1691.09 V1665.18" fill="none" stroke="#6A6A6A" stroke-width="1.1"/>
<line x1="2605.34" y1="1667.5" x2="2615.37" y2="1667.5" stroke="#6A6A6A" stroke-width="1"  shape-rendering="crispEdges"/>
<line x1="2621.76" y1="1667.5" x2="2631.8" y2="1667.5" stroke="#6A6A6A" stroke-width="1"  shape-rendering="crispEdges"/>
<line x1="2605.34" y1="1671.5" x2="2615.37" y2="1671.5" stroke="#6A6A6A" stroke-width="1"  shape-rendering="crispEdges"/>
<line x1="2621.76" y1="1671.5" x2="2631.8" y2="1671.5" stroke="#6A6A6A" stroke-width="1"  shape-rendering="crispEdges"/>
<line x1="2605.34" y1="1675.5" x2="2615.37" y2="1675.5" stroke="#6A6A6A" stroke-width="1"  shape-rendering="crispEdges"/>
<line x1="2621.76" y1="1675.5" x2="2631.8" y2="1675.5" stroke="#6A6A6A" stroke-width="1"  shape-rendering="crispEdges"/>
<line x1="2605.34" y1="1679.5" x2="2615.37" y2="1679.5" stroke="#6A6A6A" stroke-width="1"  shape-rendering="crispEdges"/>
<line x1="2621.76" y1="1679.5" x2="2631.8" y2="1679.5" stroke="#6A6A6A" stroke-width="1"  shape-rendering="crispEdges"/>
<line x1="2605.34" y1="1683.5" x2="2615.37" y2="1683.5" stroke="#6A6A6A" stroke-width="1"  shape-rendering="crispEdges"/>
<line x1="2621.76" y1="1683.5" x2="2631.8" y2="1683.5" stroke="#6A6A6A" stroke-width="1"  shape-rendering="crispEdges"/>
<rect x="2678.14" y="1660.98" width="33.75" height="3.83" fill="#6A6A6A"  shape-rendering="crispEdges"/>
<path d="M2682.33 1664.81 V1678.31 Q2682.33 1680.5 2684.52 1680.5 H2705.69 Q2707.88 1680.5 2707.88 1678.31 V1664.81" fill="none" stroke="#6A6A6A" stroke-width="1.1"/>
<line x1="2688.35" y1="1669.74" x2="2701.49" y2="1669.74" stroke="#6A6A6A" stroke-width="2"  shape-rendering="crispEdges"/>
<line x1="2695.1" y1="1680.5" x2="2695.1" y2="1690.17" stroke="#6A6A6A" stroke-width="1.6"  shape-rendering="crispEdges"/>
<line x1="2690.18" y1="1690.17" x2="2700.03" y2="1690.17" stroke="#6A6A6A" stroke-width="1.6"  shape-rendering="crispEdges"/>
<rect x="2743.89" y="1673.29" width="15.22" height="4.76" fill="#6A6A6A"  shape-rendering="crispEdges"/>
<line x1="2769.95" y1="1676.5" x2="3017.81" y2="1676.5" stroke="#9C9C9C" stroke-width="1"  shape-rendering="crispEdges"/>
<line x1="2894.5" y1="1670.06" x2="2894.5" y2="1681.85" stroke="#9C9C9C" stroke-width="1"  shape-rendering="crispEdges"/>
<rect x="2839.95" y="1662.26" width="9.89" height="27.58" fill="#6A6A6A"  shape-rendering="crispEdges"/>
<rect x="3029.03" y="1673.67" width="20.16" height="4.95" fill="#6A6A6A"  shape-rendering="crispEdges"/>
<rect x="3036.64" y="1666.25" width="4.95" height="19.97" fill="#6A6A6A"  shape-rendering="crispEdges"/>
<rect x="3163.88" y="1661.85" width="28.38" height="28.39" fill="none" stroke="#6A6A6A" stroke-width="1.1" rx="1.5" />
<line x1="3177.5" y1="1671.96" x2="3177.5" y2="1663.21" stroke="#6A6A6A" stroke-width="1"  shape-rendering="crispEdges"/>
<polyline points="3182.16,1667.77 3177.97,1663.21 3173.79,1667.77" fill="none" stroke="#6A6A6A" stroke-width="1.1" />
<line x1="3177.5" y1="1680.33" x2="3177.5" y2="1689.08" stroke="#6A6A6A" stroke-width="1"  shape-rendering="crispEdges"/>
<polyline points="3173.79,1684.51 3177.97,1689.08 3182.16,1684.51" fill="none" stroke="#6A6A6A" stroke-width="1.1" />
<line x1="3173.79" y1="1676.5" x2="3165.04" y2="1676.5" stroke="#6A6A6A" stroke-width="1"  shape-rendering="crispEdges"/>
<polyline points="3169.6,1671.96 3165.04,1676.14 3169.6,1680.33" fill="none" stroke="#6A6A6A" stroke-width="1.1" />
<line x1="3182.16" y1="1676.5" x2="3190.91" y2="1676.5" stroke="#6A6A6A" stroke-width="1"  shape-rendering="crispEdges"/>
<polyline points="3186.34,1680.33 3190.91,1676.14 3186.34,1671.96" fill="none" stroke="#6A6A6A" stroke-width="1.1" />
</svg>
<div id="tx">
<span class="t" style="left:899.19px;top:435.19px;font-size:26px;color:#444444;transform:scaleX(0.9323);">16</span>
<span class="t" style="left:958.62px;top:435.19px;font-size:26px;color:#444444;transform:scaleX(0.9323);">15</span>
<span class="t" style="left:1018.05px;top:435.19px;font-size:26px;color:#444444;transform:scaleX(0.9323);">14</span>
<span class="t" style="left:1077.48px;top:435.19px;font-size:26px;color:#444444;transform:scaleX(0.9323);">13</span>
<span class="t" style="left:1136.91px;top:435.19px;font-size:26px;color:#444444;transform:scaleX(0.9323);">12</span>
<span class="t" style="left:1196.27px;top:435.19px;font-size:26px;color:#444444;transform:scaleX(1.0027);">11</span>
<span class="t" style="left:1255.77px;top:435.19px;font-size:26px;color:#444444;transform:scaleX(0.9323);">10</span>
<span class="t" style="left:1321.66px;top:435.19px;font-size:26px;color:#444444;transform:scaleX(0.9692);">9</span>
<span class="t" style="left:1381.09px;top:435.19px;font-size:26px;color:#444444;transform:scaleX(0.9692);">8</span>
<span class="t" style="left:1440.52px;top:435.19px;font-size:26px;color:#444444;transform:scaleX(0.9692);">7</span>
<span class="t" style="left:1499.95px;top:435.19px;font-size:26px;color:#444444;transform:scaleX(0.9692);">6</span>
<span class="t" style="left:1559.38px;top:435.19px;font-size:26px;color:#444444;transform:scaleX(0.9692);">5</span>
<span class="t" style="left:1619.78px;top:435.19px;font-size:26px;color:#444444;transform:scaleX(0.9000);">4</span>
<span class="t" style="left:1679.21px;top:435.19px;font-size:26px;color:#444444;transform:scaleX(0.9000);">3</span>
<span class="t" style="left:1737.67px;top:435.19px;font-size:26px;color:#444444;transform:scaleX(0.9692);">2</span>
<span class="t" style="left:1797.10px;top:435.19px;font-size:26px;color:#444444;transform:scaleX(0.9692);">1</span>
<span class="t" style="left:1856.53px;top:435.19px;font-size:26px;color:#444444;transform:scaleX(0.9692);">0</span>
<span class="t" style="left:1915.96px;top:435.19px;font-size:26px;color:#444444;transform:scaleX(0.9692);">1</span>
<span class="t" style="left:1975.39px;top:435.19px;font-size:26px;color:#444444;transform:scaleX(0.9692);">2</span>
<span class="t" style="left:2035.79px;top:435.19px;font-size:26px;color:#444444;transform:scaleX(0.9000);">3</span>
<span class="t" style="left:2095.22px;top:435.19px;font-size:26px;color:#444444;transform:scaleX(0.9000);">4</span>
<span class="t" style="left:2153.68px;top:435.19px;font-size:26px;color:#444444;transform:scaleX(0.9692);">5</span>
<span class="t" style="left:2213.11px;top:435.19px;font-size:26px;color:#444444;transform:scaleX(0.9692);">6</span>
<span class="t" style="left:2272.54px;top:435.19px;font-size:26px;color:#444444;transform:scaleX(0.9692);">7</span>
<span class="t" style="left:2331.97px;top:435.19px;font-size:26px;color:#444444;transform:scaleX(0.9692);">8</span>
<span class="t" style="left:2391.40px;top:435.19px;font-size:26px;color:#444444;transform:scaleX(0.9692);">9</span>
<span class="t" style="left:2444.37px;top:435.19px;font-size:26px;color:#444444;transform:scaleX(0.9323);">10</span>
<span class="t" style="left:2503.73px;top:435.19px;font-size:26px;color:#444444;transform:scaleX(1.0027);">11</span>
<span class="t" style="left:2563.23px;top:435.19px;font-size:26px;color:#444444;transform:scaleX(0.9323);">12</span>
<span class="t" style="left:2622.66px;top:435.19px;font-size:26px;color:#444444;transform:scaleX(0.9323);">13</span>
<span class="t" style="left:2682.09px;top:435.19px;font-size:26px;color:#444444;transform:scaleX(0.9323);">14</span>
<span class="t" style="left:2741.52px;top:435.19px;font-size:26px;color:#444444;transform:scaleX(0.9323);">15</span>
<span class="t" style="left:2800.95px;top:435.19px;font-size:26px;color:#444444;transform:scaleX(0.9323);">16</span>
<span class="t" style="left:518.00px;top:504.29px;font-size:26px;color:#444444;transform-origin:7.50px 13.04px;transform:rotate(-90deg) scaleX(0.9692);">9</span>
<span class="t" style="left:518.00px;top:563.72px;font-size:26px;color:#444444;transform-origin:7.50px 13.04px;transform:rotate(-90deg) scaleX(0.9692);">8</span>
<span class="t" style="left:518.00px;top:623.15px;font-size:26px;color:#444444;transform-origin:7.50px 13.04px;transform:rotate(-90deg) scaleX(0.9692);">7</span>
<span class="t" style="left:518.00px;top:682.58px;font-size:26px;color:#444444;transform-origin:7.50px 13.04px;transform:rotate(-90deg) scaleX(0.9692);">6</span>
<span class="t" style="left:518.00px;top:742.01px;font-size:26px;color:#444444;transform-origin:7.50px 13.04px;transform:rotate(-90deg) scaleX(0.9692);">5</span>
<span class="t" style="left:518.50px;top:801.44px;font-size:26px;color:#444444;transform-origin:7.00px 13.04px;transform:rotate(-90deg) scaleX(0.9000);">4</span>
<span class="t" style="left:518.50px;top:860.87px;font-size:26px;color:#444444;transform-origin:7.00px 13.04px;transform:rotate(-90deg) scaleX(0.9000);">3</span>
<span class="t" style="left:518.00px;top:920.30px;font-size:26px;color:#444444;transform-origin:7.50px 13.04px;transform:rotate(-90deg) scaleX(0.9692);">2</span>
<span class="t" style="left:518.00px;top:979.73px;font-size:26px;color:#444444;transform-origin:7.50px 13.04px;transform:rotate(-90deg) scaleX(0.9692);">1</span>
<span class="t" style="left:518.00px;top:1039.16px;font-size:26px;color:#444444;transform-origin:7.50px 13.04px;transform:rotate(-90deg) scaleX(0.9692);">0</span>
<span class="t" style="left:518.00px;top:1098.59px;font-size:26px;color:#444444;transform-origin:7.50px 13.04px;transform:rotate(-90deg) scaleX(0.9692);">1</span>
<span class="t" style="left:518.00px;top:1158.02px;font-size:26px;color:#444444;transform-origin:7.50px 13.04px;transform:rotate(-90deg) scaleX(0.9692);">2</span>
<span class="t" style="left:518.50px;top:1217.45px;font-size:26px;color:#444444;transform-origin:7.00px 13.04px;transform:rotate(-90deg) scaleX(0.9000);">3</span>
<span class="t" style="left:518.50px;top:1276.88px;font-size:26px;color:#444444;transform-origin:7.00px 13.04px;transform:rotate(-90deg) scaleX(0.9000);">4</span>
<span class="t" style="left:518.00px;top:1336.31px;font-size:26px;color:#444444;transform-origin:7.50px 13.04px;transform:rotate(-90deg) scaleX(0.9692);">5</span>
<span class="t" style="left:518.00px;top:1395.74px;font-size:26px;color:#444444;transform-origin:7.50px 13.04px;transform:rotate(-90deg) scaleX(0.9692);">6</span>
<span class="t" style="left:518.00px;top:1455.17px;font-size:26px;color:#444444;transform-origin:7.50px 13.04px;transform:rotate(-90deg) scaleX(0.9692);">7</span>
<span class="t" style="left:518.00px;top:1514.60px;font-size:26px;color:#444444;transform-origin:7.50px 13.04px;transform:rotate(-90deg) scaleX(0.9692);">8</span>
<span class="t" style="left:518.00px;top:1574.03px;font-size:26px;color:#444444;transform-origin:7.50px 13.04px;transform:rotate(-90deg) scaleX(0.9692);">9</span>
<span class="t" style="left:48.04px;top:465.83px;font-size:36px;color:#444444;transform:scaleX(0.6824);">1</span>
<span class="t" style="left:46.48px;top:710.43px;font-size:36px;color:#C9502F;transform:scaleX(0.9222);">2</span>
<span class="t" style="left:74.27px;top:119.81px;font-size:30px;color:#FFFFFF;transform:scaleX(0.9134);">File</span>
<span class="t" style="left:213.68px;top:119.81px;font-size:30px;color:#B7472A;transform:scaleX(1.0085);">Home</span>
<span class="t" style="left:358.02px;top:119.81px;font-size:30px;color:#FFFFFF;transform:scaleX(0.9879);">Insert</span>
<span class="t" style="left:497.10px;top:119.81px;font-size:30px;color:#FFFFFF;transform:scaleX(0.9511);">Draw</span>
<span class="t" style="left:626.97px;top:119.81px;font-size:30px;color:#FFFFFF;transform:scaleX(1.0145);">Design</span>
<span class="t" style="left:785.30px;top:119.81px;font-size:30px;color:#FFFFFF;transform:scaleX(0.9571);">Transitions</span>
<span class="t" style="left:989.00px;top:119.81px;font-size:30px;color:#FFFFFF;transform:scaleX(1.0040);">Animations</span>
<span class="t" style="left:1201.04px;top:119.81px;font-size:30px;color:#FFFFFF;transform:scaleX(0.9637);">Slide Show</span>
<span class="t" style="left:1410.55px;top:119.81px;font-size:30px;color:#FFFFFF;transform:scaleX(0.9266);">Review</span>
<span class="t" style="left:1567.00px;top:119.81px;font-size:30px;color:#FFFFFF;transform:scaleX(0.9720);">View</span>
<span class="t" style="left:1694.15px;top:119.81px;font-size:30px;color:#FFFFFF;transform:scaleX(0.9230);">MLC</span>
<span class="t" style="left:1842.70px;top:119.81px;font-size:30px;color:#F6DDD6;transform:scaleX(1.0184);">Tell me what you want to do</span>
<span class="t" style="left:2137.63px;top:41.00px;font-size:30px;color:#F1CDC3;transform:scaleX(0.9826);">Presentation1  -  PowerPoint</span>
<span class="t" style="left:2616.09px;top:34.50px;font-size:30px;color:#F1CDC3;transform:scaleX(0.9536);">Maurizio La Cava</span>
<span class="t" style="left:3020.49px;top:120.50px;font-size:30px;color:#FFFFFF;transform:scaleX(0.9111);">Share</span>
<span class="t" style="left:44.38px;top:298.81px;font-size:30px;color:#3B3B3B;transform:scaleX(0.9118);">Paste</span>
<span class="t" style="left:52.59px;top:391.18px;font-size:27.2px;color:#666666;transform:scaleX(1.0127);">Clipboard</span>
<span class="t" style="left:280.63px;top:298.81px;font-size:30px;color:#3B3B3B;transform:scaleX(0.9837);">New</span>
<span class="t" style="left:269.05px;top:338.00px;font-size:30px;color:#3B3B3B;transform:scaleX(0.9535);">Slide</span>
<span class="t" style="left:433.75px;top:199.70px;font-size:30px;color:#3B3B3B;transform:scaleX(0.9770);">Layout</span>
<span class="t" style="left:433.87px;top:266.61px;font-size:30px;color:#3B3B3B;transform:scaleX(0.9126);">Reset</span>
<span class="t" style="left:434.72px;top:333.00px;font-size:30px;color:#3B3B3B;transform:scaleX(0.9756);">Section</span>
<span class="t" style="left:372.86px;top:391.18px;font-size:27.2px;color:#666666;transform:scaleX(0.9385);">Slides</span>
<span class="t" style="left:967.01px;top:221.00px;font-size:30px;color:#A3A3A3;transform:scaleX(0.9925);">28+</span>
<span class="t" style="left:601.23px;top:299.14px;font-size:40px;color:#A8A8A8;transform:scaleX(0.8846);font-weight:bold;">B</span>
<span class="t" style="left:682.80px;top:301.41px;font-size:37px;color:#A8A8A8;transform:scaleX(1.2000);font-style:italic;font-family:'Liberation Serif',serif;">I</span>
<span class="t" style="left:751.95px;top:302.93px;font-size:36px;color:#A8A8A8;transform:scaleX(1.0273);-webkit-text-stroke:0.7px #A8A8A8;">U</span>
<span class="t" style="left:833.59px;top:304.58px;font-size:37px;color:#D0D0D0;transform:scaleX(0.9130);font-weight:bold;">S</span>
<span class="t" style="left:832.09px;top:303.08px;font-size:37px;color:#A8A8A8;transform:scaleX(0.9130);font-weight:bold;">S</span>
<span class="t" style="left:899.59px;top:312.39px;font-size:26px;color:#A8A8A8;transform:scaleX(0.9115);-webkit-text-stroke:0.7px #A8A8A8;">abc</span>
<span class="t" style="left:973.00px;top:298.63px;font-size:36px;color:#A8A8A8;transform:scaleX(0.9638);-webkit-text-stroke:0.7px #A8A8A8;">AV</span>
<span class="t" style="left:1061.00px;top:309.00px;font-size:30px;color:#A8A8A8;transform:scaleX(0.8917);-webkit-text-stroke:0.7px #A8A8A8;">Aa</span>
<span class="t" style="left:886.03px;top:391.18px;font-size:27.2px;color:#666666;transform:scaleX(0.9840);">Font</span>
<span class="t" style="left:1086.60px;top:218.66px;font-size:37.5px;color:#A8A8A8;transform:scaleX(0.9160);-webkit-text-stroke:0.7px #A8A8A8;">A</span>
<span class="t" style="left:1167.00px;top:225.00px;font-size:30px;color:#A8A8A8;transform:scaleX(0.9300);-webkit-text-stroke:0.7px #A8A8A8;">A</span>
<span class="t" style="left:1233.80px;top:211.53px;font-size:36px;color:#A8A8A8;transform:scaleX(0.7333);-webkit-text-stroke:0.7px #A8A8A8;">A</span>
<span class="t" style="left:1136.77px;top:302.08px;font-size:24px;color:#A8A8A8;transform:scaleX(0.9311);-webkit-text-stroke:0.7px #A8A8A8;">ab</span>
<span class="t" style="left:1228.40px;top:302.04px;font-size:40px;color:#A8A8A8;transform:scaleX(0.9111);-webkit-text-stroke:0.7px #A8A8A8;">A</span>
<span class="t" style="left:1403.84px;top:214.73px;font-size:12px;color:#B4B4B4;transform:scaleX(0.8371);">1</span>
<span class="t" style="left:1403.84px;top:228.92px;font-size:12px;color:#B4B4B4;transform:scaleX(0.8371);">2</span>
<span class="t" style="left:1403.84px;top:242.88px;font-size:12px;color:#B4B4B4;transform:scaleX(0.8371);">3</span>
<span class="t" style="left:1467.08px;top:391.18px;font-size:27.2px;color:#666666;transform:scaleX(0.9609);">Paragraph</span>
<span class="t" style="left:1747.60px;top:186.11px;font-size:32px;color:#A8A8A8;transform:scaleX(0.9409);-webkit-text-stroke:0.7px #A8A8A8;">A</span>
<span class="t" style="left:1832.46px;top:218.90px;font-size:14px;color:#3F6FBF;transform:scaleX(0.8560);font-weight:bold;">A</span>
<span class="t" style="left:2331.70px;top:287.50px;font-size:30px;color:#3B3B3B;transform:scaleX(0.9741);">Arrange</span>
<span class="t" style="left:2460.04px;top:287.50px;font-size:30px;color:#A3A3A3;transform:scaleX(0.9650);">Quick</span>
<span class="t" style="left:2450.08px;top:327.40px;font-size:30px;color:#A3A3A3;transform:scaleX(0.9248);">Styles</span>
<span class="t" style="left:2248.97px;top:391.18px;font-size:27.2px;color:#666666;transform:scaleX(1.0145);">Drawing</span>
<span class="t" style="left:2619.05px;top:192.00px;font-size:30px;color:#A3A3A3;transform:scaleX(0.9538);">Shape Fill</span>
<span class="t" style="left:2619.02px;top:253.00px;font-size:30px;color:#A3A3A3;transform:scaleX(0.9817);">Shape Outline</span>
<span class="t" style="left:2621.65px;top:318.50px;font-size:30px;color:#A3A3A3;transform:scaleX(0.9466);">Shape Effects</span>
<span class="t" style="left:2915.06px;top:194.60px;font-size:30px;color:#3B3B3B;transform:scaleX(0.9694);">Find</span>
<span class="t" style="left:2860.78px;top:247.07px;font-size:26.5px;color:#7A7A7A;transform:scaleX(1.0167);-webkit-text-stroke:0.7px #7A7A7A;">ab</span>
<span class="t" style="left:2880.21px;top:266.87px;font-size:26.5px;color:#7A7A7A;transform:scaleX(0.7857);-webkit-text-stroke:0.7px #7A7A7A;">a</span>
<span class="t" style="left:2892.48px;top:266.87px;font-size:26.5px;color:#4A7EBB;transform:scaleX(1.0167);-webkit-text-stroke:0.7px #4A7EBB;">c</span>
<span class="t" style="left:2911.63px;top:256.70px;font-size:30px;color:#3B3B3B;transform:scaleX(0.9359);">Replace</span>
<span class="t" style="left:2915.06px;top:318.50px;font-size:30px;color:#3B3B3B;transform:scaleX(0.9393);">Select</span>
<span class="t" style="left:2911.96px;top:391.18px;font-size:27.2px;color:#666666;transform:scaleX(1.0211);">Editing</span>
<span class="t" style="left:30.22px;top:1663.68px;font-size:27.2px;color:#585858;transform:scaleX(0.9753);">Slide 2 of 2</span>
<span class="t" style="left:275.15px;top:1663.68px;font-size:27.2px;color:#585858;transform:scaleX(0.9273);">English (United States)</span>
<div style="position:absolute;left:510px;top:1670px;width:371px;height:45px;background:#fff;border:1px solid #767676"></div>
<span class="t" style="left:515.43px;top:1681.27px;font-size:28.5px;color:#575757;transform:scaleX(1.0362);">Presentation1 - PowerPoint</span>
<span class="t" style="left:2323.60px;top:1663.18px;font-size:27.2px;color:#585858;transform:scaleX(0.9996);">Notes</span>
<span class="t" style="left:3077.06px;top:1664.38px;font-size:27.2px;color:#585858;transform:scaleX(0.9391);">63%</span>
</div>
</body></html>
